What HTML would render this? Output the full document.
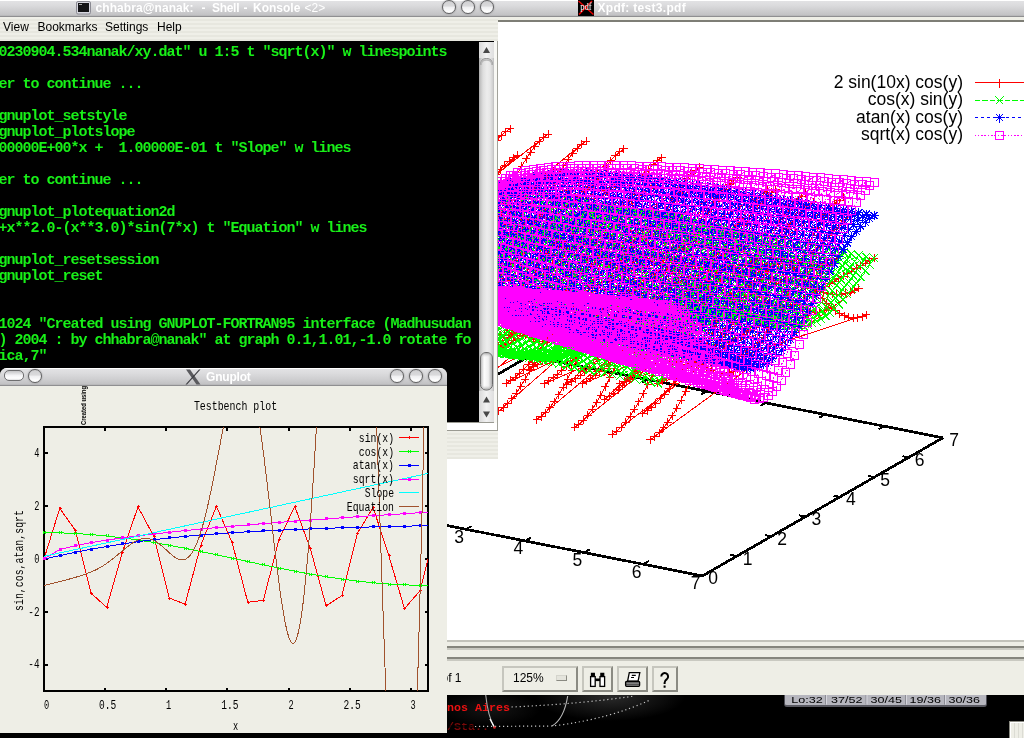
<!DOCTYPE html>
<html><head><meta charset="utf-8"><title>desktop</title>
<style>
html,body{margin:0;padding:0;}
body{width:1024px;height:738px;overflow:hidden;background:#000;position:relative;font-family:"Liberation Sans",sans-serif;}
.abs{position:absolute;}
.tbar{position:absolute;left:0;top:0;height:16px;background:linear-gradient(#fff 0,#fff 1px,#e2e2e4 1px,#dcdcde 5px,#cfcfd1 10px,#c2c2c4 15px,#b0b0b2 16px);border-bottom:1px solid #8f8f91;}
.ttxt{position:absolute;color:#fff;font-weight:bold;font-size:12px;line-height:16px;white-space:nowrap;}
.btn{position:absolute;width:12px;height:12px;border-radius:50%;border:1px solid #606062;background:linear-gradient(#cfcfd1 0,#dadadc 42%,#efeff1 52%,#fff 90%);box-shadow:0 0 1.5px #707072;}
.stripes{background:repeating-linear-gradient(#efefe8 0,#efefe8 2px,#e7e7df 2px,#e7e7df 4px);}
#term{position:absolute;left:0;top:42px;width:479px;text-indent:-1.5px;height:377px;padding-top:3px;background:#000;color:#18f018;font-family:"Liberation Mono",monospace;font-weight:bold;font-size:15px;letter-spacing:-1px;line-height:16px;white-space:pre;overflow:hidden;}
#term div{height:16px;text-indent:-1.5px;}
.tb{box-sizing:border-box;background:#eeeee6;border:2px solid;border-color:#c6c6be #8b8b83 #8b8b83 #c6c6be;}
.mi{position:absolute;top:0;}
</style></head><body>
<div id="root" style="position:absolute;left:0;top:0;width:1024px;height:738px;overflow:hidden;background:#000;will-change:transform;">

<!-- ================= XPDF WINDOW ================= -->
<div class="abs" id="xpdf" style="left:440px;top:0;width:600px;height:695px;background:#eeeee6;">
  <div class="tbar" style="width:600px;"></div>
  <div class="abs" style="left:138px;top:0;width:16px;height:16px;background:#000;overflow:hidden;">
    <svg width="16" height="16" style="position:absolute;left:0;top:0"><path d="M0.500 1L15.500 14.500M14 1L1 14.500" stroke="#e60000" stroke-width="1.500"/><text x="8" y="10.300" font-family="Liberation Serif" font-size="11" fill="#fff" text-anchor="middle" textLength="11.500" lengthAdjust="spacingAndGlyphs">pdf</text></svg>
  </div>
  <div class="ttxt" style="left:157.5px;top:0;letter-spacing:0.3px;">Xpdf: test3.pdf</div>
  <div class="abs" style="left:0;top:20px;width:600px;height:2px;background:#7e7e76;"></div>
  <div class="abs" style="left:0;top:22px;width:600px;height:618px;background:#fff;"></div>
  <!-- bottom bands -->
  <div class="abs" style="left:0;top:640px;width:600px;height:2px;background:#c2c2ba;"></div>
  <div class="abs" style="left:0;top:646px;width:600px;height:2px;background:#85857d;"></div>
  <div class="abs" style="left:0;top:648px;width:600px;height:2px;background:#c9c9c1;"></div>
  <div class="abs" style="left:0;top:657px;width:600px;height:2px;background:#85857d;"></div>
  <div class="abs" style="left:0;top:659px;width:600px;height:2px;background:#c9c9c1;"></div>
  <!-- toolbar -->
  <div class="abs" style="left:1.5px;top:671px;font-size:12px;line-height:14px;color:#000;">of 1</div>
  <div class="abs tb" style="left:62px;top:666px;width:76px;height:26px;"></div>
  <div class="abs" style="left:73px;top:671px;font-size:12px;line-height:14px;color:#000;">125%</div>
  <div class="abs" style="left:116px;top:675px;width:9px;height:4px;background:#e4e4dc;border:1.5px solid;border-color:#d4d4cc #8a8a82 #8a8a82 #d4d4cc;"></div>
  <div class="abs tb" style="left:142px;top:666px;width:31px;height:26px;"></div>
  <div class="abs tb" style="left:177px;top:666px;width:31px;height:26px;"></div>
  <div class="abs tb" style="left:212px;top:666px;width:26px;height:26px;"></div>
  <svg class="abs" style="left:144px;top:666.5px" width="100" height="26">
    <!-- binoculars -->
    <g stroke="#000" stroke-width="1.3" fill="#fff"><rect x="6.600" y="9.6" width="4.6" height="9.8"/><rect x="16" y="9.6" width="4.6" height="9.8"/><path d="M7.5 9.6v-3.2h2.8v3.200M16.900 9.6v-3.2h2.8v3.200" fill="#000"/><path d="M11.200 11.5h4.800v2.600h-4.800" fill="#000" stroke="none"/></g>
    <!-- printer -->
    <g stroke="#000" stroke-width="1.3" fill="#fff"><path d="M45.3 5.600h10.500l-1.700 8.500h-10.500z"/><path d="M47.800 8.300h4M47 10.500h3" stroke-width="1.200"/><rect x="41.600" y="14.300" width="14" height="5" rx="1" fill="#999"/><path d="M42.500 15.800h12.500M42.500 17.600h12.500" stroke="#000" stroke-width="1" stroke-dasharray="1 1"/></g>
    <!-- question -->
    <path d="M77.300 9.500a3.400 3.400 0 1 1 5.600 2.600q-2.300 1.600 -2.300 3.600v1.300M80.600 18.600v2.200" stroke="#000" stroke-width="2" fill="none"/>
  </svg>
</div>

<!-- 3D plot page content -->
<svg class="abs" style="left:0;top:0" width="1024" height="645" viewBox="0 0 1024 645">
  <g shape-rendering="crispEdges" transform="translate(0.5,0.5)">
  <!-- back border -->
  <path d="M288.2 493.8L528.7 355.7L942.4 437.3" stroke="#000" stroke-width="2.7" fill="none"/>
  <path d="M529 355.7l-5.6 3.2M588.1 367.3l-5.6 3.2M647.2 379l-5.6 3.2M706.3 390.6l-5.6 3.2M765.4 402.3l-5.6 3.2M824.5 413.9l-5.6 3.2M883.6 425.6l-5.6 3.2M942.7 437.2l-5.6 3.2" stroke="#000" stroke-width="2" fill="none"/>
<defs><marker id="mr" markerUnits="userSpaceOnUse" markerWidth="10" markerHeight="10" refX="5" refY="5" overflow="visible"><path d="M1 5h8M5 1v8" stroke="#ff0000" stroke-width="1" fill="none"/></marker><marker id="mg" markerUnits="userSpaceOnUse" markerWidth="10" markerHeight="10" refX="5" refY="5" overflow="visible"><path d="M1 1l8 8M9 1l-8 8" stroke="#00ff00" stroke-width="1" fill="none"/></marker><marker id="mb" markerUnits="userSpaceOnUse" markerWidth="10" markerHeight="10" refX="5" refY="5" overflow="visible"><path d="M0.5 5h9M5 0.5v9M1.5 1.5l7 7M8.5 1.5l-7 7" stroke="#0000ff" stroke-width="1" fill="none"/></marker><marker id="mm" markerUnits="userSpaceOnUse" markerWidth="10" markerHeight="10" refX="5" refY="5" overflow="visible"><path d="M1 1h8v8h-8z" stroke="#ff00ff" stroke-width="1" fill="none"/></marker></defs>
<path d="M484.5 194.7 488.9 192.1 493.3 189.6 497.7 187 502.1 184.5 293.6 253.3M483.3 159.7 487.7 152.3 492.1 145.7 496.5 140 500.9 135.1 505.3 131.1 509.7 128.1 301.2 279.7M482 190.8 486.4 184.8 490.8 179.1 495.2 173.8 499.7 169 504.1 164.6 508.5 160.7 512.9 157.3 517.3 154.5 308.7 353.3M485.2 227.8 489.6 229.7 494 231.3 498.4 232.4 502.8 233.1 507.2 233.3 511.6 232.9 516.1 231.9 520.5 230.3 524.9 228.1 316.3 370.9M483.9 227.4 488.3 231.7 492.8 235.8 497.2 239.5 501.6 242.8 506 245.5 510.4 247.5 514.8 248.8 519.2 249.3 523.6 249 528 247.8 532.5 245.7 323.9 309.4M482.7 225.9 487.1 222.4 491.5 218.8 495.9 215.3 500.3 211.8 504.7 208.4 509.2 205 513.6 201.7 518 198.5 522.4 195.4 526.8 192.5 531.2 189.6 535.6 186.8 540 184.2 331.5 259M485.9 242.5 490.3 232.4 494.7 222.2 499.1 212 503.5 202 507.9 192.3 512.3 183 516.7 174.2 521.1 165.9 525.6 158.4 530 151.7 534.4 145.8 538.8 140.9 543.2 136.9 547.6 133.8 339 294M484.6 247.9 489 242.3 493.4 236.5 497.8 230.7 502.3 224.8 506.7 218.9 511.1 213 515.5 207.3 519.9 201.8 524.3 196.5 528.7 191.4 533.1 186.7 537.5 182.3 542 178.3 546.4 174.7 550.8 171.5 555.2 168.7 346.6 366.4M483.4 212.4 487.8 214.3 492.2 216.6 496.6 219.3 501 222.3 505.4 225.4 509.8 228.5 514.2 231.7 518.7 234.7 523.1 237.5 527.5 240.1 531.9 242.2 536.3 243.9 540.7 245 545.1 245.6 549.5 245.5 553.9 244.8 558.4 243.3 562.8 241.1 354.2 374.8M482.1 205.7 486.5 207.1 490.9 209.2 495.4 211.8 499.8 214.9 504.2 218.4 508.6 222.2 513 226.2 517.4 230.2 521.8 234.3 526.2 238.2 530.6 241.8 535.1 245.1 539.5 248 543.9 250.4 548.3 252.1 552.7 253.1 557.1 253.5 561.5 253 565.9 251.7 570.3 249.6 361.8 309.3M485.3 266.9 489.7 263.4 494.1 259.6 498.5 255.7 502.9 251.6 507.3 247.4 511.8 243 516.2 238.6 520.6 234.1 525 229.6 529.4 225.1 533.8 220.6 538.2 216.2 542.6 211.9 547 207.8 551.5 203.7 555.9 199.9 560.3 196.3 564.7 192.9 569.1 189.7 573.5 186.8 577.9 184.1 369.4 265.8M484 318.9 488.5 314.4 492.9 309 497.3 302.6 501.7 295.4 506.1 287.5 510.5 278.9 514.9 269.7 519.3 260.1 523.7 250.1 528.2 239.9 532.6 229.6 537 219.4 541.4 209.3 545.8 199.5 550.2 190.1 554.6 181.2 559 172.9 563.4 165.3 567.9 158.5 572.3 152.6 576.7 147.6 581.1 143.6 585.5 140.5 376.9 308.6M482.8 285.3 487.2 282.7 491.6 279.9 496 276.7 500.4 273.2 504.9 269.5 509.3 265.5 513.7 261.2 518.1 256.7 522.5 252.1 526.9 247.3 531.3 242.4 535.7 237.5 540.1 232.5 544.6 227.5 549 222.5 553.4 217.7 557.8 213 562.2 208.4 566.6 204.1 571 199.9 575.4 196 579.8 192.4 584.3 189.1 588.7 186.1 593.1 183.4 384.5 378.7M486 221.7 490.4 218.3 494.8 215.8 499.2 214 503.6 213.1 508 212.9 512.4 213.5 516.8 214.7 521.3 216.6 525.7 219 530.1 221.9 534.5 225.1 538.9 228.7 543.3 232.4 547.7 236.2 552.1 239.9 556.5 243.5 561 246.9 565.4 250 569.8 252.7 574.2 254.8 578.6 256.4 583 257.3 587.4 257.5 591.8 256.9 596.2 255.6 600.7 253.4 392.1 377.8M484.7 234.4 489.1 229.6 493.6 225.5 498 222.2 502.4 219.6 506.8 217.8 511.2 216.8 515.6 216.5 520 216.9 524.4 218 528.8 219.6 533.2 221.8 537.7 224.4 542.1 227.4 546.5 230.7 550.9 234.1 555.3 237.6 559.7 241 564.1 244.4 568.5 247.5 572.9 250.3 577.4 252.7 581.8 254.6 586.2 256 590.6 256.8 595 256.8 599.4 256.2 603.8 254.8 608.2 252.6 399.7 309.4M483.5 300.8 487.9 300 492.3 298.9 496.7 297.4 501.1 295.6 505.5 293.4 510 290.8 514.4 287.9 518.8 284.6 523.2 281 527.6 277 532 272.7 536.4 268.1 540.8 263.3 545.2 258.3 549.7 253 554.1 247.7 558.5 242.3 562.9 236.8 567.3 231.4 571.7 226 576.1 220.7 580.5 215.6 584.9 210.6 589.3 205.9 593.8 201.5 598.2 197.4 602.6 193.5 607 190.1 611.4 187 615.8 184.2 407.3 273.5M482.2 324.6 486.7 328 491.1 330.8 495.5 332.9 499.9 334.1 504.3 334.4 508.7 333.8 513.1 332.3 517.5 329.7 521.9 326.2 526.4 321.7 530.8 316.2 535.2 309.9 539.6 302.7 544 294.8 548.4 286.2 552.8 277.1 557.2 267.5 561.6 257.5 566.1 247.4 570.5 237.1 574.9 226.9 579.3 216.8 583.7 207 588.1 197.7 592.5 188.8 596.9 180.5 601.3 173 605.8 166.2 610.2 160.3 614.6 155.3 619 151.3 623.4 148.3 414.8 323.5M485.4 299.5 489.8 298.3 494.2 296.9 498.6 295.3 503.1 293.7 507.5 291.8 511.9 289.8 516.3 287.7 520.7 285.3 525.1 282.7 529.5 280 533.9 277.1 538.3 273.9 542.8 270.7 547.2 267.2 551.6 263.6 556 259.9 560.4 256.1 564.8 252.2 569.2 248.2 573.6 244.2 578 240.2 582.5 236.1 586.9 232.1 591.3 228.2 595.7 224.3 600.1 220.6 604.5 216.9 608.9 213.4 613.3 210 617.7 206.8 622.2 203.8 626.6 201 631 198.3 422.4 390.1M484.2 288.9 488.6 279.8 493 270.9 497.4 262.5 501.8 254.6 506.2 247.3 510.6 240.6 515 234.7 519.5 229.5 523.9 225.2 528.3 221.8 532.7 219.3 537.1 217.6 541.5 216.8 545.9 216.8 550.3 217.6 554.7 219.1 559.2 221.4 563.6 224.2 568 227.5 572.4 231.2 576.8 235.2 581.2 239.4 585.6 243.7 590 248 594.4 252.2 598.9 256 603.3 259.6 607.7 262.6 612.1 265.2 616.5 267.1 620.9 268.2 625.3 268.7 629.7 268.3 634.1 267 638.6 264.9 430 380.1M482.9 308.8 487.3 300.8 491.7 293 496.2 285.2 500.6 277.8 505 270.6 509.4 263.8 513.8 257.5 518.2 251.8 522.6 246.6 527 242 531.4 238.1 535.9 234.8 540.3 232.3 544.7 230.4 549.1 229.2 553.5 228.7 557.9 228.8 562.3 229.4 566.7 230.6 571.1 232.3 575.6 234.3 580 236.7 584.4 239.3 588.8 242 593.2 244.9 597.6 247.7 602 250.4 606.4 252.9 610.8 255.1 615.3 256.9 619.7 258.4 624.1 259.3 628.5 259.7 632.9 259.5 637.3 258.6 641.7 257.1 646.1 254.9 437.6 309.9M481.7 305.6 486.1 306.7 490.5 308 494.9 309.2 499.3 310.4 503.7 311.5 508.1 312.4 512.6 313.1 517 313.5 521.4 313.6 525.8 313.3 530.2 312.6 534.6 311.5 539 309.9 543.4 307.8 547.8 305.3 552.3 302.2 556.7 298.7 561.1 294.7 565.5 290.3 569.9 285.5 574.3 280.3 578.7 274.8 583.1 269 587.5 262.9 592 256.7 596.4 250.4 600.8 244.1 605.2 237.7 609.6 231.5 614 225.4 618.4 219.4 622.8 213.8 627.2 208.4 631.7 203.4 636.1 198.8 640.5 194.5 644.9 190.8 649.3 187.5 653.7 184.7 445.1 282.2M484.8 294.2 489.3 298.8 493.7 303.6 498.1 308.5 502.5 313.5 506.9 318.4 511.3 323.1 515.7 327.4 520.1 331.3 524.5 334.7 529 337.4 533.4 339.3 537.8 340.5 542.2 340.7 546.6 340.1 551 338.5 555.4 335.9 559.8 332.4 564.2 328 568.7 322.6 573.1 316.3 577.5 309.2 581.9 301.4 586.3 293 590.7 284 595.1 274.5 599.5 264.7 603.9 254.7 608.4 244.6 612.8 234.6 617.2 224.6 621.6 215 626 205.8 630.4 197 634.8 188.9 639.2 181.4 643.6 174.8 648.1 168.9 652.5 164 656.9 160 661.3 157 452.7 338.7M483.6 322.3 488 320.1 492.4 318 496.8 315.9 501.2 313.8 505.7 311.8 510.1 309.7 514.5 307.6 518.9 305.6 523.3 303.5 527.7 301.3 532.1 299.2 536.5 297 540.9 294.7 545.4 292.4 549.8 290 554.2 287.6 558.6 285.1 563 282.5 567.4 279.9 571.8 277.2 576.2 274.5 580.6 271.7 585.1 268.8 589.5 265.9 593.9 263 598.3 260 602.7 257 607.1 254 611.5 250.9 615.9 247.9 620.3 244.8 624.8 241.8 629.2 238.8 633.6 235.8 638 232.8 642.4 229.9 646.8 227 651.2 224.2 655.6 221.4 660 218.7 664.5 216.1 668.9 213.5 460.3 400.7M482.4 376.7 486.8 369.4 491.2 361.5 495.6 353 500 344 504.4 334.6 508.8 325 513.2 315.2 517.6 305.4 522.1 295.7 526.5 286.1 530.9 277 535.3 268.2 539.7 259.9 544.1 252.3 548.5 245.4 552.9 239.3 557.3 234 561.8 229.6 566.2 226.2 570.6 223.6 575 222 579.4 221.3 583.8 221.4 588.2 222.4 592.6 224.2 597 226.7 601.5 229.9 605.9 233.5 610.3 237.6 614.7 242 619.1 246.6 623.5 251.3 627.9 256 632.3 260.5 636.7 264.8 641.2 268.7 645.6 272.1 650 274.9 654.4 277 658.8 278.4 663.2 279 667.6 278.8 672 277.6 676.4 275.5 467.9 381.7M485.5 366.8 489.9 361.7 494.3 356.2 498.8 350.2 503.2 343.8 507.6 337.2 512 330.3 516.4 323.2 520.8 316 525.2 308.9 529.6 301.7 534 294.7 538.5 288 542.9 281.4 547.3 275.3 551.7 269.5 556.1 264.2 560.5 259.3 564.9 255 569.3 251.3 573.7 248.2 578.2 245.6 582.6 243.6 587 242.3 591.4 241.4 595.8 241.2 600.2 241.4 604.6 242 609 243.1 613.4 244.5 617.9 246.2 622.3 248.1 626.7 250.1 631.1 252.2 635.5 254.2 639.9 256.2 644.3 258 648.7 259.5 653.1 260.7 657.6 261.6 662 262.1 666.4 262 670.8 261.5 675.2 260.4 679.6 258.7 684 256.5 475.5 310.9M484.3 307 488.7 305.9 493.1 305.3 497.5 305.3 501.9 305.8 506.3 306.6 510.7 307.9 515.2 309.4 519.6 311.2 524 313.2 528.4 315.2 532.8 317.3 537.2 319.3 541.6 321.2 546 322.9 550.4 324.3 554.9 325.3 559.3 326 563.7 326.2 568.1 325.9 572.5 325.1 576.9 323.7 581.3 321.8 585.7 319.2 590.1 316.1 594.6 312.3 599 308 603.4 303.2 607.8 297.9 612.2 292.1 616.6 285.9 621 279.4 625.4 272.6 629.8 265.6 634.3 258.5 638.7 251.3 643.1 244.2 647.5 237.1 651.9 230.2 656.3 223.5 660.7 217.2 665.1 211.2 669.5 205.6 674 200.6 678.4 196 682.8 192 687.2 188.5 691.6 185.7 483 291.9 487.4 289.8 491.9 288.6 496.3 288.3 500.7 288.9 505.1 290.3 509.5 292.5 513.9 295.3 518.3 298.7 522.7 302.6 527.1 306.9 531.6 311.4 536 316.1 540.4 320.8 544.8 325.4 549.2 329.8 553.6 333.9 558 337.5 562.4 340.6 566.8 343.1 571.3 344.9 575.7 345.9 580.1 346.1 584.5 345.4 588.9 343.8 593.3 341.2 597.7 337.7 602.1 333.3 606.5 328.1 611 321.9 615.4 315 619.8 307.4 624.2 299.2 628.6 290.4 633 281.2 637.4 271.7 641.8 262 646.2 252.2 650.7 242.4 655.1 232.7 659.5 223.4 663.9 214.4 668.3 205.9 672.7 197.9 677.1 190.7 681.5 184.1 685.9 178.4 690.4 173.6 694.8 169.7 699.2 166.6 490.6 353.9 495 351.3 499.4 348.7 503.8 346 508.3 343.2 512.7 340.4 517.1 337.5 521.5 334.6 525.9 331.6 530.3 328.6 534.7 325.6 539.1 322.5 543.5 319.5 548 316.4 552.4 313.4 556.8 310.4 561.2 307.4 565.6 304.4 570 301.4 574.4 298.5 578.8 295.7 583.2 292.9 587.7 290.1 592.1 287.5 596.5 284.8 600.9 282.3 605.3 279.8 609.7 277.4 614.1 275 618.5 272.7 622.9 270.4 627.4 268.2 631.8 266 636.2 263.9 640.6 261.8 645 259.7 649.4 257.7 653.8 255.6 658.2 253.5 662.6 251.5 667.1 249.4 671.5 247.3 675.9 245.1 680.3 242.9 684.7 240.7 689.1 238.4 693.5 236.1 697.9 233.7 702.3 231.2 706.8 228.7 498.2 410.4 502.6 407.4 507 403.4 511.4 398.4 515.8 392.6 520.2 385.9 524.7 378.5 529.1 370.4 533.5 361.6 537.9 352.4 542.3 342.7 546.7 332.8 551.1 322.7 555.5 312.7 559.9 302.6 564.4 292.9 568.8 283.4 573.2 274.4 577.6 265.9 582 258.1 586.4 251.1 590.8 244.8 595.2 239.4 599.6 234.9 604.1 231.4 608.5 228.9 612.9 227.3 617.3 226.6 621.7 226.9 626.1 228.1 630.5 230 634.9 232.7 639.3 236.1 643.8 240 648.2 244.3 652.6 249 657 253.9 661.4 258.9 665.8 263.8 670.2 268.6 674.6 273.1 679 277.3 683.5 280.9 687.9 283.9 692.3 286.3 696.7 287.8 701.1 288.6 705.5 288.4 709.9 287.3 714.3 285.2 505.8 382.7 510.2 379.9 514.6 376.6 519 372.8 523.4 368.6 527.8 364 532.2 359 536.6 353.6 541.1 347.9 545.5 342 549.9 335.9 554.3 329.6 558.7 323.3 563.1 317 567.5 310.6 571.9 304.5 576.3 298.4 580.8 292.6 585.2 287.1 589.6 281.9 594 277.1 598.4 272.7 602.8 268.7 607.2 265.2 611.6 262.1 616 259.6 620.5 257.5 624.9 255.9 629.3 254.8 633.7 254.1 638.1 253.8 642.5 253.9 646.9 254.3 651.3 255 655.7 255.9 660.2 257 664.6 258.2 669 259.4 673.4 260.6 677.8 261.8 682.2 262.8 686.6 263.6 691 264.2 695.4 264.4 699.9 264.3 704.3 263.8 708.7 262.9 713.1 261.6 717.5 259.7 721.9 257.4 513.3 312.5 517.8 310.3 522.2 308.8 526.6 307.9 531 307.7 535.4 308.1 539.8 309 544.2 310.4 548.6 312.3 553 314.5 557.5 317 561.9 319.7 566.3 322.5 570.7 325.3 575.1 328.1 579.5 330.7 583.9 333.1 588.3 335.1 592.7 336.8 597.2 338 601.6 338.6 606 338.7 610.4 338.2 614.8 337 619.2 335.1 623.6 332.6 628 329.3 632.4 325.4 636.9 320.8 641.3 315.6 645.7 309.8 650.1 303.5 654.5 296.8 658.9 289.6 663.3 282.1 667.7 274.4 672.1 266.5 676.6 258.6 681 250.7 685.4 242.9 689.8 235.3 694.2 228 698.6 221 703 214.4 707.4 208.4 711.8 202.9 716.3 198 720.7 193.8 725.1 190.2 729.5 187.3 520.9 302.5 525.3 300.3 529.7 299.1 534.2 298.7 538.6 299.1 543 300.3 547.4 302.2 551.8 304.7 556.2 307.8 560.6 311.3 565 315.2 569.4 319.4 573.9 323.6 578.3 327.9 582.7 332.1 587.1 336.2 591.5 339.9 595.9 343.2 600.3 346 604.7 348.2 609.1 349.8 613.6 350.6 618 350.6 622.4 349.8 626.8 348.1 631.2 345.6 635.6 342.1 640 337.8 644.4 332.7 648.8 326.8 653.3 320.1 657.7 312.8 662.1 304.9 666.5 296.4 670.9 287.6 675.3 278.5 679.7 269.2 684.1 259.7 688.5 250.4 693 241.1 697.4 232.1 701.8 223.5 706.2 215.3 710.6 207.7 715 200.6 719.4 194.3 723.8 188.8 728.2 184.1 732.7 180.2 737.1 177.2 528.5 369 532.9 366.4 537.3 363.6 541.7 360.5 546.1 357.3 550.6 354 555 350.5 559.4 346.8 563.8 343 568.2 339.2 572.6 335.2 577 331.2 581.4 327.2 585.8 323.2 590.3 319.2 594.7 315.2 599.1 311.3 603.5 307.5 607.9 303.7 612.3 300.2 616.7 296.7 621.1 293.4 625.5 290.3 630 287.4 634.4 284.6 638.8 282.1 643.2 279.7 647.6 277.5 652 275.5 656.4 273.7 660.8 272 665.2 270.5 669.7 269.1 674.1 267.8 678.5 266.6 682.9 265.5 687.3 264.4 691.7 263.3 696.1 262.2 700.5 261.1 704.9 260 709.4 258.7 713.8 257.4 718.2 255.9 722.6 254.3 727 252.6 731.4 250.6 735.8 248.6 740.2 246.3 744.6 243.8 536.1 419.1 540.5 416.1 544.9 412 549.3 407.1 553.7 401.2 558.1 394.4 562.5 386.9 567 378.6 571.4 369.7 575.8 360.3 580.2 350.5 584.6 340.5 589 330.3 593.4 320 597.8 309.8 602.2 299.9 606.7 290.3 611.1 281.2 615.5 272.6 619.9 264.7 624.3 257.5 628.7 251.2 633.1 245.7 637.5 241.2 641.9 237.7 646.4 235.1 650.8 233.5 655.2 232.9 659.6 233.3 664 234.5 668.4 236.6 672.8 239.4 677.2 242.8 681.6 246.9 686.1 251.3 690.5 256.2 694.9 261.2 699.3 266.4 703.7 271.5 708.1 276.4 712.5 281.1 716.9 285.4 721.3 289.1 725.8 292.3 730.2 294.7 734.6 296.4 739 297.2 743.4 297 747.8 296 752.2 293.9 543.7 383.2 548.1 380.4 552.5 377.3 556.9 373.8 561.3 370 565.7 365.9 570.1 361.4 574.5 356.7 579 351.8 583.4 346.7 587.8 341.4 592.2 336 596.6 330.6 601 325.1 605.4 319.7 609.8 314.3 614.2 309.1 618.6 304.1 623.1 299.3 627.5 294.7 631.9 290.4 636.3 286.4 640.7 282.8 645.1 279.5 649.5 276.5 653.9 274 658.3 271.8 662.8 270 667.2 268.5 671.6 267.4 676 266.6 680.4 266 684.8 265.7 689.2 265.7 693.6 265.8 698 266 702.5 266.3 706.9 266.7 711.3 267 715.7 267.3 720.1 267.4 724.5 267.5 728.9 267.3 733.3 266.9 737.7 266.2 742.2 265.2 746.6 263.9 751 262.3 755.4 260.3 759.8 257.9 551.2 314.8 555.7 312.6 560.1 311.2 564.5 310.5 568.9 310.6 573.3 311.4 577.7 312.7 582.1 314.7 586.5 317.1 590.9 319.9 595.4 323 599.8 326.3 604.2 329.8 608.6 333.3 613 336.7 617.4 340 621.8 342.9 626.2 345.6 630.6 347.7 635.1 349.4 639.5 350.5 643.9 350.9 648.3 350.6 652.7 349.6 657.1 347.8 661.5 345.2 665.9 341.9 670.3 337.8 674.7 333 679.2 327.4 683.6 321.3 688 314.5 692.4 307.2 696.8 299.5 701.2 291.4 705.6 283 710 274.5 714.4 265.9 718.9 257.3 723.3 248.9 727.7 240.6 732.1 232.7 736.5 225.2 740.9 218.2 745.3 211.7 749.7 205.8 754.1 200.7 758.6 196.2 763 192.5 767.4 189.5 558.8 313.9 563.2 311.8 567.6 310.4 572.1 309.9 576.5 310.1 580.9 311 585.3 312.6 589.7 314.7 594.1 317.4 598.5 320.4 602.9 323.8 607.3 327.5 611.8 331.2 616.2 335 620.6 338.7 625 342.3 629.4 345.5 633.8 348.4 638.2 350.8 642.6 352.6 647 353.9 651.5 354.4 655.9 354.3 660.3 353.3 664.7 351.6 669.1 349 673.5 345.7 677.9 341.5 682.3 336.6 686.7 330.9 691.2 324.5 695.6 317.6 700 310 704.4 302.1 708.8 293.7 713.2 285.1 717.6 276.2 722 267.3 726.4 258.5 730.8 249.7 735.3 241.2 739.7 233 744.1 225.3 748.5 218 752.9 211.3 757.3 205.3 761.7 200 766.1 195.4 770.5 191.7 775 188.7 566.4 384 570.8 381.3 575.2 378.3 579.6 374.9 584 371.3 588.5 367.4 592.9 363.3 597.3 359 601.7 354.4 606.1 349.7 610.5 344.8 614.9 339.9 619.3 334.9 623.7 329.9 628.2 325 632.6 320.1 637 315.3 641.4 310.6 645.8 306.2 650.2 301.9 654.6 297.9 659 294.2 663.4 290.7 667.9 287.5 672.3 284.6 676.7 282.1 681.1 279.8 685.5 277.9 689.9 276.3 694.3 274.9 698.7 273.8 703.1 273 707.6 272.3 712 271.8 716.4 271.5 720.8 271.3 725.2 271.1 729.6 271 734 270.9 738.4 270.7 742.8 270.5 747.2 270.1 751.7 269.5 756.1 268.8 760.5 267.8 764.9 266.6 769.3 265.1 773.7 263.3 778.1 261.2 782.5 258.8 574 426.8 578.4 423.8 582.8 419.8 587.2 414.8 591.6 408.8 596 402.1 600.4 394.5 604.9 386.2 609.3 377.3 613.7 367.9 618.1 358.1 622.5 348 626.9 337.7 631.3 327.4 635.7 317.3 640.1 307.3 644.6 297.7 649 288.5 653.4 279.9 657.8 271.9 662.2 264.8 666.6 258.4 671 253 675.4 248.4 679.8 244.9 684.3 242.3 688.7 240.8 693.1 240.2 697.5 240.5 701.9 241.8 706.3 243.8 710.7 246.7 715.1 250.1 719.5 254.2 724 258.7 728.4 263.6 732.8 268.7 737.2 273.8 741.6 279 746 284 750.4 288.7 754.8 293 759.2 296.8 763.7 299.9 768.1 302.4 772.5 304.1 776.9 304.9 781.3 304.7 785.7 303.7 790.1 301.6 581.6 383.3 586 380.6 590.4 377.7 594.8 374.5 599.2 371.1 603.6 367.5 608 363.6 612.4 359.6 616.8 355.5 621.3 351.2 625.7 346.8 630.1 342.3 634.5 337.8 638.9 333.3 643.3 328.8 647.7 324.3 652.1 320 656.5 315.8 661 311.7 665.4 307.7 669.8 304 674.2 300.5 678.6 297.2 683 294.1 687.4 291.3 691.8 288.8 696.2 286.5 700.7 284.4 705.1 282.6 709.5 281 713.9 279.6 718.3 278.4 722.7 277.4 727.1 276.5 731.5 275.8 735.9 275.1 740.4 274.5 744.8 273.9 749.2 273.3 753.6 272.7 758 271.9 762.4 271.1 766.8 270.2 771.2 269.1 775.6 267.8 780.1 266.3 784.5 264.6 788.9 262.7 793.3 260.5 797.7 258.1 589.1 317.8 593.5 315.7 598 314.4 602.4 313.9 606.8 314.2 611.2 315.3 615.6 317 620 319.4 624.4 322.2 628.8 325.5 633.2 329.2 637.7 333.1 642.1 337.1 646.5 341.2 650.9 345.2 655.3 349 659.7 352.5 664.1 355.6 668.5 358.2 672.9 360.2 677.4 361.6 681.8 362.3 686.2 362.3 690.6 361.4 695 359.7 699.4 357.1 703.8 353.7 708.2 349.5 712.6 344.4 717.1 338.6 721.5 332.1 725.9 325 730.3 317.2 734.7 309 739.1 300.4 743.5 291.5 747.9 282.4 752.3 273.2 756.8 264.1 761.2 255.1 765.6 246.3 770 237.9 774.4 229.9 778.8 222.5 783.2 215.6 787.6 209.4 792 204 796.5 199.4 800.9 195.6 805.3 192.6 596.7 326.2 601.1 324 605.5 322.6 609.9 321.8 614.4 321.8 618.8 322.3 623.2 323.5 627.6 325.2 632 327.3 636.4 329.8 640.8 332.7 645.2 335.7 649.6 338.8 654.1 342 658.5 345.1 662.9 348.1 667.3 350.7 671.7 353.1 676.1 355 680.5 356.4 684.9 357.3 689.3 357.6 693.8 357.2 698.2 356.1 702.6 354.2 707 351.7 711.4 348.4 715.8 344.4 720.2 339.7 724.6 334.3 729 328.3 733.5 321.8 737.9 314.8 742.3 307.3 746.7 299.5 751.1 291.5 755.5 283.2 759.9 275 764.3 266.7 768.7 258.6 773.2 250.6 777.6 243 782 235.7 786.4 228.9 790.8 222.7 795.2 217 799.6 211.9 804 207.6 808.4 203.9 812.9 201 604.3 398.6 608.7 395.9 613.1 392.7 617.5 389.1 621.9 385.1 626.3 380.7 630.8 375.9 635.2 370.9 639.6 365.6 644 360 648.4 354.3 652.8 348.5 657.2 342.6 661.6 336.7 666 330.8 670.5 325.1 674.9 319.4 679.3 314 683.7 308.8 688.1 303.9 692.5 299.4 696.9 295.2 701.3 291.3 705.7 287.9 710.2 285 714.6 282.4 719 280.3 723.4 278.6 727.8 277.3 732.2 276.4 736.6 275.8 741 275.6 745.4 275.7 749.9 276 754.3 276.5 758.7 277.2 763.1 277.9 767.5 278.7 771.9 279.5 776.3 280.2 780.7 280.8 785.1 281.2 789.6 281.4 794 281.4 798.4 281 802.8 280.3 807.2 279.2 811.6 277.7 816 275.8 820.4 273.4 611.9 433.6 616.3 430.5 620.7 426.5 625.1 421.5 629.5 415.7 633.9 408.9 638.3 401.4 642.7 393.2 647.2 384.4 651.6 375.1 656 365.3 660.4 355.3 664.8 345.2 669.2 335 673.6 324.9 678 315 682.4 305.5 686.9 296.4 691.3 287.8 695.7 280 700.1 272.9 704.5 266.5 708.9 261.1 713.3 256.6 717.7 253.1 722.1 250.5 726.6 249 731 248.3 735.4 248.7 739.8 249.9 744.2 251.9 748.6 254.6 753 258 757.4 262 761.8 266.5 766.3 271.2 770.7 276.2 775.1 281.3 779.5 286.3 783.9 291.2 788.3 295.8 792.7 300.1 797.1 303.8 801.5 306.9 806 309.3 810.4 310.9 814.8 311.6 819.2 311.5 823.6 310.4 828 308.3 619.4 383.2 623.9 380.5 628.3 377.8 632.7 374.9 637.1 371.9 641.5 368.8 645.9 365.6 650.3 362.4 654.7 359 659.1 355.6 663.6 352.1 668 348.6 672.4 345 676.8 341.5 681.2 337.9 685.6 334.4 690 331 694.4 327.6 698.8 324.2 703.3 321 707.7 317.8 712.1 314.8 716.5 311.9 720.9 309.1 725.3 306.4 729.7 303.8 734.1 301.4 738.5 299.1 743 296.9 747.4 294.8 751.8 292.9 756.2 291 760.6 289.2 765 287.5 769.4 285.9 773.8 284.3 778.2 282.7 782.7 281.1 787.1 279.6 791.5 278 795.9 276.3 800.3 274.7 804.7 272.9 809.1 271.1 813.5 269.2 817.9 267.2 822.4 265 826.8 262.8 831.2 260.4 835.6 257.9 627 321.7 631.4 319.6 635.8 318.4 640.3 318.1 644.7 318.6 649.1 319.9 653.5 321.9 657.9 324.6 662.3 327.8 666.7 331.6 671.1 335.7 675.5 340 680 344.5 684.4 349 688.8 353.4 693.2 357.7 697.6 361.6 702 365.1 706.4 368.1 710.8 370.4 715.2 372.1 719.7 373 724.1 373.1 728.5 372.4 732.9 370.7 737.3 368.2 741.7 364.7 746.1 360.3 750.5 355.1 754.9 349.1 759.4 342.3 763.8 334.8 768.2 326.7 772.6 318.1 777 309.1 781.4 299.8 785.8 290.2 790.2 280.6 794.6 271 799.1 261.5 803.5 252.3 807.9 243.5 812.3 235.2 816.7 227.4 821.1 220.2 825.5 213.8 829.9 208.2 834.3 203.4 838.8 199.5 843.2 196.5 634.6 339.3 639 337 643.4 335.4 647.8 334.5 652.2 334.1 656.7 334.3 661.1 335 665.5 336.1 669.9 337.7 674.3 339.6 678.7 341.7 683.1 344.1 687.5 346.5 691.9 349 696.4 351.4 700.8 353.6 705.2 355.6 709.6 357.4 714 358.7 718.4 359.7 722.8 360.1 727.2 360 731.6 359.4 736.1 358.1 740.5 356.2 744.9 353.6 749.3 350.4 753.7 346.6 758.1 342.1 762.5 337.1 766.9 331.6 771.3 325.5 775.8 319 780.2 312.2 784.6 305 789 297.7 793.4 290.2 797.8 282.6 802.2 275.1 806.6 267.6 811 260.3 815.5 253.3 819.9 246.7 824.3 240.4 828.7 234.6 833.1 229.3 837.5 224.6 841.9 220.4 846.3 216.9 850.7 214 642.2 412.9 646.6 410 651 406.7 655.4 402.8 659.8 398.4 664.2 393.5 668.6 388.2 673.1 382.6 677.5 376.5 681.9 370.2 686.3 363.7 690.7 357.1 695.1 350.3 699.5 343.5 703.9 336.8 708.3 330.2 712.8 323.8 717.2 317.6 721.6 311.8 726 306.3 730.4 301.2 734.8 296.6 739.2 292.4 743.6 288.8 748 285.7 752.5 283.1 756.9 281.1 761.3 279.6 765.7 278.7 770.1 278.2 774.5 278.2 778.9 278.5 783.3 279.3 787.7 280.3 792.2 281.6 796.6 283.1 801 284.7 805.4 286.4 809.8 288.1 814.2 289.6 818.6 291 823 292.2 827.4 293.1 831.9 293.7 836.3 293.9 840.7 293.6 845.1 292.9 849.5 291.7 853.9 289.9 858.3 287.6 649.8 439.3 654.2 436.3 658.6 432.3 663 427.4 667.4 421.6 671.8 415 676.2 407.7 680.6 399.6 685 391 689.5 381.8 693.9 372.3 698.3 362.5 702.7 352.6 707.1 342.6 711.5 332.7 715.9 323.1 720.3 313.7 724.7 304.8 729.2 296.5 733.6 288.8 738 281.8 742.4 275.6 746.8 270.2 751.2 265.8 755.6 262.3 760 259.7 764.4 258.1 768.9 257.5 773.3 257.7 777.7 258.8 782.1 260.6 786.5 263.3 790.9 266.5 795.3 270.3 799.7 274.5 804.1 279.1 808.6 283.8 813 288.7 817.4 293.5 821.8 298.2 826.2 302.6 830.6 306.6 835 310.2 839.4 313.1 843.8 315.4 848.3 316.9 852.7 317.5 857.1 317.3 861.5 316.2 865.9 314.1 657.3 382.9 661.7 380.3 666.2 377.8 670.6 375.2 675 372.7 679.4 370.1 683.8 367.6 688.2 365 692.6 362.5 697 359.9 701.4 357.3 705.9 354.8 710.3 352.2 714.7 349.7 719.1 347.1 723.5 344.6 727.9 342 732.3 339.5 736.7 336.9 741.1 334.3 745.6 331.8 750 329.2 754.4 326.7 758.8 324.1 763.2 321.6 767.6 319 772 316.5 776.4 313.9 780.8 311.3 785.3 308.8 789.7 306.2 794.1 303.7 798.5 301.1 802.9 298.6 807.3 296 811.7 293.5 816.1 290.9 820.5 288.3 825 285.8 829.4 283.2 833.8 280.7 838.2 278.1 842.6 275.6 847 273 851.4 270.5 855.8 267.9 860.2 265.3 864.7 262.8 869.1 260.2 873.5 257.7" stroke="#ff0000" fill="none" stroke-width="1" marker-start="url(#mr)" marker-mid="url(#mr)" marker-end="url(#mr)"/>
<path d="M484.5 209.5 488.9 203.5 493.3 197.2 497.7 190.9 502.1 184.5 293.6 311.2M483.3 222.1 487.7 216.7 492.1 210.9 496.5 204.9 500.9 198.7 505.3 192.4 509.7 186 301.2 312.7M482 232.9 486.4 228.2 490.8 223.1 495.2 217.7 499.7 212 504.1 206.1 508.5 200 512.9 193.8 517.3 187.5 308.7 314.2M485.2 237.6 489.6 233.3 494 228.7 498.4 223.8 502.8 218.5 507.2 212.9 511.6 207.1 516.1 201.2 520.5 195.1 524.9 189 316.3 315.7M483.9 244.5 488.3 241.2 492.8 237.5 497.2 233.4 501.6 228.9 506 224.1 510.4 219 514.8 213.6 519.2 208 523.6 202.2 528 196.4 532.5 190.5 323.9 317.2M482.7 249.3 487.1 246.8 491.5 243.9 495.9 240.7 500.3 237.1 504.7 233.1 509.2 228.8 513.6 224.1 518 219.2 522.4 214 526.8 208.7 531.2 203.2 535.6 197.6 540 191.9 331.5 318.7M485.9 250.4 490.3 248.3 494.7 245.8 499.1 243 503.5 239.8 507.9 236.3 512.3 232.4 516.7 228.3 521.1 223.9 525.6 219.2 530 214.3 534.4 209.2 538.8 204.1 543.2 198.8 547.6 193.4 339 320.2M484.6 252.5 489 250.9 493.4 249.1 497.8 246.9 502.3 244.4 506.7 241.6 511.1 238.5 515.5 235.2 519.9 231.5 524.3 227.5 528.7 223.4 533.1 219 537.5 214.4 542 209.7 546.4 204.8 550.8 199.9 555.2 194.9 346.6 321.7M483.4 254 487.8 252.7 492.2 251.2 496.6 249.5 501 247.5 505.4 245.2 509.8 242.7 514.2 240 518.7 237 523.1 233.7 527.5 230.3 531.9 226.6 536.3 222.7 540.7 218.6 545.1 214.3 549.5 210 553.9 205.5 558.4 201 562.8 196.4 354.2 323.1M482.1 255.7 486.5 254.4 490.9 253 495.4 251.4 499.8 249.6 504.2 247.7 508.6 245.6 513 243.3 517.4 240.8 521.8 238.1 526.2 235.2 530.6 232.1 535.1 228.8 539.5 225.4 543.9 221.8 548.3 218 552.7 214.1 557.1 210.2 561.5 206.1 565.9 202 570.3 197.9 361.8 324.6M485.3 256.8 489.7 255.2 494.1 253.5 498.5 251.8 502.9 249.9 507.3 247.9 511.8 245.8 516.2 243.6 520.6 241.2 525 238.7 529.4 236 533.8 233.2 538.2 230.3 542.6 227.2 547 224 551.5 220.7 555.9 217.3 560.3 213.9 564.7 210.3 569.1 206.7 573.5 203.1 577.9 199.4 369.4 326.1M484 260.6 488.5 258.7 492.9 256.7 497.3 254.6 501.7 252.6 506.1 250.5 510.5 248.3 514.9 246.1 519.3 243.8 523.7 241.4 528.2 238.9 532.6 236.4 537 233.8 541.4 231.1 545.8 228.3 550.2 225.5 554.6 222.6 559 219.6 563.4 216.6 567.9 213.5 572.3 210.4 576.7 207.2 581.1 204.1 585.5 200.9 376.9 327.6M482.8 266.2 487.2 263.8 491.6 261.4 496 258.9 500.4 256.5 504.9 254 509.3 251.6 513.7 249.1 518.1 246.6 522.5 244.2 526.9 241.6 531.3 239.1 535.7 236.6 540.1 234 544.6 231.5 549 228.9 553.4 226.3 557.8 223.7 562.2 221 566.6 218.4 571 215.8 575.4 213.1 579.8 210.4 584.3 207.8 588.7 205.1 593.1 202.4 384.5 329.1M486 270.9 490.4 268 494.8 265 499.2 262.1 503.6 259.2 508 256.3 512.4 253.4 516.8 250.6 521.3 247.8 525.7 245 530.1 242.2 534.5 239.5 538.9 236.8 543.3 234.2 547.7 231.7 552.1 229.1 556.5 226.7 561 224.2 565.4 221.9 569.8 219.5 574.2 217.2 578.6 214.9 583 212.7 587.4 210.5 591.8 208.3 596.2 206.1 600.7 203.9 392.1 330.6M484.7 279.9 489.1 276.5 493.6 273.1 498 269.7 502.4 266.3 506.8 262.9 511.2 259.5 515.6 256.1 520 252.8 524.4 249.6 528.8 246.4 533.2 243.3 537.7 240.3 542.1 237.4 546.5 234.6 550.9 231.9 555.3 229.3 559.7 226.9 564.1 224.5 568.5 222.2 572.9 220.1 577.4 218 581.8 216 586.2 214.1 590.6 212.3 595 210.5 599.4 208.8 603.8 207.1 608.2 205.4 399.7 332.1M483.5 290.3 487.9 286.7 492.3 283 496.7 279.2 501.1 275.3 505.5 271.4 510 267.5 514.4 263.7 518.8 259.8 523.2 256 527.6 252.3 532 248.7 536.4 245.2 540.8 241.8 545.2 238.5 549.7 235.4 554.1 232.5 558.5 229.7 562.9 227.1 567.3 224.7 571.7 222.4 576.1 220.3 580.5 218.4 584.9 216.6 589.3 215 593.8 213.4 598.2 212 602.6 210.6 607 209.3 611.4 208.1 615.8 206.9 407.3 333.6M482.2 301.6 486.7 297.9 491.1 294.1 495.5 290.1 499.9 286 504.3 281.8 508.7 277.5 513.1 273.2 517.5 268.8 521.9 264.5 526.4 260.2 530.8 256 535.2 251.9 539.6 247.9 544 244 548.4 240.4 552.8 236.9 557.2 233.6 561.6 230.5 566.1 227.7 570.5 225.1 574.9 222.7 579.3 220.5 583.7 218.6 588.1 216.9 592.5 215.3 596.9 214 601.3 212.8 605.8 211.7 610.2 210.8 614.6 209.9 619 209.1 623.4 208.4 414.8 335.1M485.4 309.5 489.8 305.8 494.2 301.9 498.6 297.7 503.1 293.4 507.5 288.9 511.9 284.3 516.3 279.6 520.7 274.9 525.1 270.1 529.5 265.3 533.9 260.7 538.3 256 542.8 251.6 547.2 247.2 551.6 243.1 556 239.1 560.4 235.4 564.8 232 569.2 228.8 573.6 225.9 578 223.3 582.5 220.9 586.9 218.9 591.3 217.1 595.7 215.5 600.1 214.3 604.5 213.2 608.9 212.3 613.3 211.6 617.7 211.1 622.2 210.6 626.6 210.2 631 209.9 422.4 336.6M484.2 320.6 488.6 317.3 493 313.7 497.4 309.8 501.8 305.6 506.2 301.2 510.6 296.6 515 291.7 519.5 286.8 523.9 281.7 528.3 276.6 532.7 271.4 537.1 266.3 541.5 261.2 545.9 256.2 550.3 251.4 554.7 246.8 559.2 242.3 563.6 238.2 568 234.3 572.4 230.6 576.8 227.3 581.2 224.4 585.6 221.7 590 219.4 594.4 217.5 598.9 215.8 603.3 214.4 607.7 213.4 612.1 212.6 616.5 212 620.9 211.6 625.3 211.4 629.7 211.3 634.1 211.3 638.6 211.4 430 338.1M482.9 330.4 487.3 327.8 491.7 324.7 496.2 321.3 500.6 317.6 505 313.5 509.4 309.1 513.8 304.4 518.2 299.5 522.6 294.4 527 289.1 531.4 283.7 535.9 278.2 540.3 272.7 544.7 267.2 549.1 261.8 553.5 256.5 557.9 251.4 562.3 246.5 566.7 241.8 571.1 237.4 575.6 233.4 580 229.6 584.4 226.2 588.8 223.2 593.2 220.5 597.6 218.3 602 216.4 606.4 214.8 610.8 213.6 615.3 212.8 619.7 212.2 624.1 211.9 628.5 211.8 632.9 211.9 637.3 212.1 641.7 212.5 646.1 212.9 437.6 339.6M481.7 338.3 486.1 336.5 490.5 334.2 494.9 331.5 499.3 328.5 503.7 325 508.1 321.1 512.6 316.9 517 312.3 521.4 307.4 525.8 302.3 530.2 296.9 534.6 291.3 539 285.6 543.4 279.9 547.8 274.1 552.3 268.3 556.7 262.6 561.1 257 565.5 251.7 569.9 246.5 574.3 241.6 578.7 237 583.1 232.8 587.5 228.9 592 225.5 596.4 222.4 600.8 219.7 605.2 217.5 609.6 215.6 614 214.2 618.4 213.2 622.8 212.5 627.2 212.1 631.7 212 636.1 212.2 640.5 212.5 644.9 213 649.3 213.7 653.7 214.4 445.1 341.1M484.8 343 489.3 341.6 493.7 339.8 498.1 337.6 502.5 334.9 506.9 331.8 511.3 328.3 515.7 324.3 520.1 319.9 524.5 315.2 529 310.2 533.4 304.8 537.8 299.2 542.2 293.4 546.6 287.5 551 281.5 555.4 275.4 559.8 269.4 564.2 263.5 568.7 257.7 573.1 252.1 577.5 246.8 581.9 241.7 586.3 237 590.7 232.6 595.1 228.6 599.5 225.1 603.9 222 608.4 219.3 612.8 217.1 617.2 215.3 621.6 214 626 213 630.4 212.5 634.8 212.3 639.2 212.4 643.6 212.7 648.1 213.3 652.5 214.1 656.9 214.9 661.3 215.8 452.7 342.6M483.6 347.1 488 346.6 492.4 345.8 496.8 344.5 501.2 342.7 505.7 340.5 510.1 337.9 514.5 334.7 518.9 331.1 523.3 327.1 527.7 322.6 532.1 317.8 536.5 312.6 540.9 307.1 545.4 301.3 549.8 295.4 554.2 289.3 558.6 283.1 563 276.8 567.4 270.6 571.8 264.5 576.2 258.6 580.6 252.8 585.1 247.3 589.5 242.1 593.9 237.3 598.3 232.8 602.7 228.8 607.1 225.2 611.5 222 615.9 219.4 620.3 217.2 624.8 215.4 629.2 214.1 633.6 213.3 638 212.8 642.4 212.7 646.8 213 651.2 213.5 655.6 214.3 660 215.2 664.5 216.2 668.9 217.3 460.3 344.1M482.4 349 486.8 349.3 491.2 349.3 495.6 349 500 348.2 504.4 346.9 508.8 345.2 513.2 343 517.6 340.3 522.1 337.2 526.5 333.5 530.9 329.5 535.3 324.9 539.7 320 544.1 314.7 548.5 309.1 552.9 303.3 557.3 297.2 561.8 290.9 566.2 284.6 570.6 278.3 575 271.9 579.4 265.7 583.8 259.6 588.2 253.8 592.6 248.2 597 242.9 601.5 238 605.9 233.4 610.3 229.3 614.7 225.7 619.1 222.6 623.5 219.9 627.9 217.7 632.3 216 636.7 214.7 641.2 213.9 645.6 213.5 650 213.5 654.4 213.9 658.8 214.5 663.2 215.4 667.6 216.4 672 217.6 676.4 218.8 467.9 345.6M485.5 350.1 489.9 350.8 494.3 351.2 498.8 351.2 503.2 350.9 507.6 350.1 512 348.9 516.4 347.2 520.8 345 525.2 342.3 529.6 339.2 534 335.5 538.5 331.4 542.9 326.8 547.3 321.9 551.7 316.5 556.1 310.9 560.5 305 564.9 298.8 569.3 292.5 573.7 286.1 578.2 279.7 582.6 273.3 587 267.1 591.4 260.9 595.8 255 600.2 249.3 604.6 244 609 239.1 613.4 234.5 617.9 230.4 622.3 226.7 626.7 223.6 631.1 220.9 635.5 218.7 639.9 217 644.3 215.8 648.7 215 653.1 214.7 657.6 214.7 662 215.1 666.4 215.8 670.8 216.7 675.2 217.8 679.6 219 684 220.3 475.5 347M484.3 349.6 488.7 350.7 493.1 351.6 497.5 352.3 501.9 352.7 506.3 352.7 510.7 352.4 515.2 351.6 519.6 350.4 524 348.7 528.4 346.5 532.8 343.8 537.2 340.7 541.6 337 546 332.9 550.4 328.3 554.9 323.4 559.3 318 563.7 312.4 568.1 306.5 572.5 300.3 576.9 294 581.3 287.6 585.7 281.2 590.1 274.8 594.6 268.5 599 262.4 603.4 256.5 607.8 250.8 612.2 245.5 616.6 240.5 621 236 625.4 231.9 629.8 228.2 634.3 225 638.7 222.4 643.1 220.2 647.5 218.5 651.9 217.3 656.3 216.5 660.7 216.1 665.1 216.2 669.5 216.6 674 217.3 678.4 218.2 682.8 219.3 687.2 220.5 691.6 221.8 483 348.5 487.4 349.8 491.9 350.9 496.3 352 500.7 352.9 505.1 353.5 509.5 353.8 513.9 353.8 518.3 353.4 522.7 352.6 527.1 351.4 531.6 349.7 536 347.5 540.4 344.8 544.8 341.7 549.2 338 553.6 333.9 558 329.4 562.4 324.5 566.8 319.2 571.3 313.6 575.7 307.7 580.1 301.7 584.5 295.4 588.9 289.1 593.3 282.8 597.7 276.4 602.1 270.2 606.5 264.1 611 258.3 615.4 252.7 619.8 247.4 624.2 242.4 628.6 237.9 633 233.8 637.4 230.2 641.8 227 646.2 224.4 650.7 222.2 655.1 220.5 659.5 219.2 663.9 218.4 668.3 218 672.7 218 677.1 218.4 681.5 219 685.9 219.9 690.4 220.9 694.8 222.1 699.2 223.3 490.6 350 495 351.1 499.4 352.2 503.8 353.1 508.3 353.9 512.7 354.4 517.1 354.6 521.5 354.6 525.9 354.1 530.3 353.2 534.7 352 539.1 350.2 543.5 348 548 345.3 552.4 342.2 556.8 338.6 561.2 334.6 565.6 330.1 570 325.3 574.4 320.1 578.8 314.6 583.2 308.8 587.7 302.8 592.1 296.7 596.5 290.5 600.9 284.3 605.3 278.1 609.7 272 614.1 266 618.5 260.3 622.9 254.8 627.4 249.6 631.8 244.7 636.2 240.3 640.6 236.2 645 232.6 649.4 229.5 653.8 226.8 658.2 224.6 662.6 222.9 667.1 221.6 671.5 220.7 675.9 220.3 680.3 220.2 684.7 220.4 689.1 221 693.5 221.7 697.9 222.7 702.3 223.7 706.8 224.8 498.2 351.5 502.6 352.5 507 353.3 511.4 354.1 515.8 354.7 520.2 355 524.7 355.1 529.1 354.9 533.5 354.4 537.9 353.4 542.3 352.1 546.7 350.3 551.1 348.1 555.5 345.4 559.9 342.3 564.4 338.7 568.8 334.8 573.2 330.4 577.6 325.7 582 320.6 586.4 315.3 590.8 309.7 595.2 303.9 599.6 298 604.1 291.9 608.5 285.9 612.9 279.9 617.3 274 621.7 268.2 626.1 262.6 630.5 257.2 634.9 252.2 639.3 247.4 643.8 243.1 648.2 239.1 652.6 235.6 657 232.4 661.4 229.8 665.8 227.6 670.2 225.8 674.6 224.4 679 223.5 683.5 222.9 687.9 222.7 692.3 222.8 696.7 223.2 701.1 223.8 705.5 224.5 709.9 225.4 714.3 226.3 505.8 353 510.2 353.7 514.6 354.3 519 354.9 523.4 355.2 527.8 355.4 532.2 355.3 536.6 354.9 541.1 354.2 545.5 353.2 549.9 351.7 554.3 349.9 558.7 347.7 563.1 345 567.5 341.9 571.9 338.4 576.3 334.6 580.8 330.3 585.2 325.8 589.6 320.9 594 315.7 598.4 310.3 602.8 304.8 607.2 299.1 611.6 293.3 616 287.5 620.5 281.7 624.9 276 629.3 270.5 633.7 265.1 638.1 259.9 642.5 255.1 646.9 250.5 651.3 246.2 655.7 242.4 660.2 238.9 664.6 235.8 669 233.2 673.4 230.9 677.8 229.1 682.2 227.7 686.6 226.6 691 225.9 695.4 225.5 699.9 225.4 704.3 225.6 708.7 226 713.1 226.5 717.5 227.1 721.9 227.8 513.3 354.5 517.8 354.9 522.2 355.2 526.6 355.5 531 355.6 535.4 355.5 539.8 355.2 544.2 354.6 548.6 353.7 553 352.5 557.5 351 561.9 349.1 566.3 346.8 570.7 344.2 575.1 341.2 579.5 337.8 583.9 334 588.3 329.9 592.7 325.5 597.2 320.9 601.6 315.9 606 310.8 610.4 305.5 614.8 300.1 619.2 294.7 623.6 289.2 628 283.7 632.4 278.3 636.9 273 641.3 267.9 645.7 262.9 650.1 258.3 654.5 253.9 658.9 249.8 663.3 246 667.7 242.7 672.1 239.6 676.6 237 681 234.7 685.4 232.8 689.8 231.3 694.2 230.1 698.6 229.2 703 228.6 707.4 228.3 711.8 228.2 716.3 228.3 720.7 228.6 725.1 228.9 729.5 229.3 520.9 356 525.3 356.1 529.7 356 534.2 356 538.6 355.8 543 355.4 547.4 354.8 551.8 354 556.2 352.9 560.6 351.6 565 349.9 569.4 347.9 573.9 345.6 578.3 343 582.7 340 587.1 336.7 591.5 333.1 595.9 329.2 600.3 325 604.7 320.6 609.1 316 613.6 311.2 618 306.2 622.4 301.1 626.8 296 631.2 290.8 635.6 285.7 640 280.6 644.4 275.6 648.8 270.8 653.3 266.2 657.7 261.8 662.1 257.6 666.5 253.7 670.9 250.1 675.3 246.8 679.7 243.8 684.1 241.2 688.5 238.9 693 236.9 697.4 235.2 701.8 233.9 706.2 232.8 710.6 232 715 231.4 719.4 231 723.8 230.8 728.2 230.7 732.7 230.7 737.1 230.8 528.5 357.5 532.9 357.2 537.3 356.8 541.7 356.3 546.1 355.8 550.6 355.1 555 354.2 559.4 353.1 563.8 351.8 568.2 350.3 572.6 348.5 577 346.4 581.4 344.1 585.8 341.5 590.3 338.6 594.7 335.4 599.1 331.9 603.5 328.2 607.9 324.3 612.3 320.1 616.7 315.8 621.1 311.3 625.5 306.7 630 302 634.4 297.3 638.8 292.5 643.2 287.8 647.6 283.1 652 278.5 656.4 274 660.8 269.6 665.2 265.5 669.7 261.6 674.1 257.9 678.5 254.4 682.9 251.2 687.3 248.3 691.7 245.7 696.1 243.3 700.5 241.3 704.9 239.5 709.4 237.9 713.8 236.7 718.2 235.6 722.6 234.7 727 234 731.4 233.5 735.8 233 740.2 232.6 744.6 232.3 536.1 359 540.5 358.2 544.9 357.4 549.3 356.6 553.7 355.6 558.1 354.6 562.5 353.4 567 352 571.4 350.5 575.8 348.8 580.2 346.8 584.6 344.7 589 342.3 593.4 339.7 597.8 336.8 602.2 333.8 606.7 330.5 611.1 327 615.5 323.3 619.9 319.5 624.3 315.5 628.7 311.4 633.1 307.2 637.5 302.9 641.9 298.6 646.4 294.2 650.8 289.9 655.2 285.6 659.6 281.4 664 277.3 668.4 273.3 672.8 269.4 677.2 265.8 681.6 262.3 686.1 259 690.5 255.9 694.9 253.1 699.3 250.5 703.7 248.1 708.1 245.9 712.5 244 716.9 242.3 721.3 240.7 725.8 239.4 730.2 238.2 734.6 237.1 739 236.2 743.4 235.3 747.8 234.5 752.2 233.8 543.7 360.5 548.1 359.3 552.5 358 556.9 356.7 561.3 355.4 565.7 354 570.1 352.4 574.5 350.8 579 349 583.4 347 587.8 344.9 592.2 342.7 596.6 340.2 601 337.7 605.4 334.9 609.8 331.9 614.2 328.8 618.6 325.6 623.1 322.2 627.5 318.7 631.9 315.1 636.3 311.3 640.7 307.6 645.1 303.7 649.5 299.8 653.9 295.9 658.3 292.1 662.8 288.2 667.2 284.4 671.6 280.7 676 277.1 680.4 273.5 684.8 270.2 689.2 266.9 693.6 263.8 698 260.9 702.5 258.1 706.9 255.5 711.3 253.1 715.7 250.8 720.1 248.7 724.5 246.8 728.9 245 733.3 243.3 737.7 241.8 742.2 240.4 746.6 239 751 237.7 755.4 236.5 759.8 235.3 551.2 362 555.7 360.3 560.1 358.6 564.5 356.8 568.9 355.1 573.3 353.2 577.7 351.3 582.1 349.3 586.5 347.3 590.9 345.1 595.4 342.9 599.8 340.5 604.2 338 608.6 335.5 613 332.8 617.4 330 621.8 327.1 626.2 324.1 630.6 321 635.1 317.8 639.5 314.5 643.9 311.2 648.3 307.9 652.7 304.5 657.1 301.1 661.5 297.7 665.9 294.3 670.3 290.9 674.7 287.5 679.2 284.2 683.6 281 688 277.8 692.4 274.7 696.8 271.7 701.2 268.8 705.6 266 710 263.3 714.4 260.7 718.9 258.2 723.3 255.9 727.7 253.6 732.1 251.5 736.5 249.4 740.9 247.4 745.3 245.5 749.7 243.7 754.1 241.9 758.6 240.2 763 238.5 767.4 236.8 558.8 363.5 563.2 361.3 567.6 359.1 572.1 356.9 576.5 354.7 580.9 352.4 585.3 350.2 589.7 347.9 594.1 345.5 598.5 343.1 602.9 340.7 607.3 338.2 611.8 335.7 616.2 333.1 620.6 330.5 625 327.9 629.4 325.2 633.8 322.4 638.2 319.6 642.6 316.8 647 313.9 651.5 311.1 655.9 308.2 660.3 305.3 664.7 302.3 669.1 299.4 673.5 296.5 677.9 293.6 682.3 290.7 686.7 287.8 691.2 284.9 695.6 282.1 700 279.3 704.4 276.6 708.8 273.9 713.2 271.2 717.6 268.6 722 266 726.4 263.5 730.8 261 735.3 258.6 739.7 256.2 744.1 253.9 748.5 251.6 752.9 249.3 757.3 247.1 761.7 244.8 766.1 242.6 770.5 240.4 775 238.3 566.4 365 570.8 362.3 575.2 359.6 579.6 356.9 584 354.3 588.5 351.6 592.9 349 597.3 346.3 601.7 343.7 606.1 341.1 610.5 338.5 614.9 335.9 619.3 333.3 623.7 330.8 628.2 328.3 632.6 325.7 637 323.2 641.4 320.7 645.8 318.3 650.2 315.8 654.6 313.3 659 310.9 663.4 308.4 667.9 306 672.3 303.6 676.7 301.1 681.1 298.7 685.5 296.3 689.9 293.8 694.3 291.4 698.7 288.9 703.1 286.5 707.6 284 712 281.5 716.4 279 720.8 276.5 725.2 273.9 729.6 271.4 734 268.8 738.4 266.2 742.8 263.6 747.2 261 751.7 258.4 756.1 255.8 760.5 253.1 764.9 250.4 769.3 247.8 773.7 245.1 778.1 242.4 782.5 239.7 574 366.5 578.4 363.3 582.8 360.1 587.2 357 591.6 353.9 596 350.8 600.4 347.8 604.9 344.8 609.3 341.9 613.7 339.1 618.1 336.3 622.5 333.6 626.9 331 631.3 328.4 635.7 326 640.1 323.6 644.6 321.3 649 319.1 653.4 316.9 657.8 314.8 662.2 312.7 666.6 310.7 671 308.7 675.4 306.8 679.8 304.8 684.3 302.9 688.7 300.9 693.1 299 697.5 297 701.9 295 706.3 292.9 710.7 290.8 715.1 288.6 719.5 286.4 724 284.1 728.4 281.7 732.8 279.3 737.2 276.7 741.6 274.1 746 271.4 750.4 268.7 754.8 265.8 759.2 262.9 763.7 259.9 768.1 256.9 772.5 253.8 776.9 250.7 781.3 247.6 785.7 244.4 790.1 241.2 581.6 368 586 364.3 590.4 360.7 594.8 357.1 599.2 353.5 603.6 350 608 346.6 612.4 343.4 616.8 340.2 621.3 337.1 625.7 334.2 630.1 331.4 634.5 328.7 638.9 326.2 643.3 323.8 647.7 321.6 652.1 319.5 656.5 317.5 661 315.6 665.4 313.8 669.8 312.2 674.2 310.6 678.6 309 683 307.5 687.4 306.1 691.8 304.6 696.2 303.2 700.7 301.7 705.1 300.1 709.5 298.5 713.9 296.9 718.3 295.1 722.7 293.2 727.1 291.2 731.5 289.1 735.9 286.9 740.4 284.5 744.8 282 749.2 279.3 753.6 276.5 758 273.6 762.4 270.5 766.8 267.3 771.2 264 775.6 260.7 780.1 257.2 784.5 253.6 788.9 250 793.3 246.4 797.7 242.7 589.1 369.5 593.5 365.3 598 361.2 602.4 357.2 606.8 353.2 611.2 349.4 615.6 345.6 620 342 624.4 338.6 628.8 335.3 633.2 332.2 637.7 329.3 642.1 326.6 646.5 324.1 650.9 321.8 655.3 319.6 659.7 317.7 664.1 316 668.5 314.4 672.9 313 677.4 311.7 681.8 310.5 686.2 309.4 690.6 308.3 695 307.3 699.4 306.3 703.8 305.3 708.2 304.3 712.6 303.2 717.1 302 721.5 300.7 725.9 299.3 730.3 297.7 734.7 296 739.1 294 743.5 291.9 747.9 289.6 752.3 287.1 756.8 284.4 761.2 281.5 765.6 278.4 770 275.1 774.4 271.7 778.8 268.1 783.2 264.3 787.6 260.5 792 256.5 796.5 252.4 800.9 248.3 805.3 244.2 596.7 370.9 601.1 366.4 605.5 361.9 609.9 357.4 614.4 353 618.8 348.8 623.2 344.7 627.6 340.8 632 337.1 636.4 333.6 640.8 330.4 645.2 327.4 649.6 324.6 654.1 322.1 658.5 319.9 662.9 317.9 667.3 316.2 671.7 314.7 676.1 313.4 680.5 312.2 684.9 311.3 689.3 310.5 693.8 309.8 698.2 309.2 702.6 308.6 707 308.1 711.4 307.5 715.8 306.9 720.2 306.2 724.6 305.4 729 304.4 733.5 303.3 737.9 302 742.3 300.5 746.7 298.8 751.1 296.8 755.5 294.5 759.9 292 764.3 289.3 768.7 286.3 773.2 283 777.6 279.6 782 275.9 786.4 271.9 790.8 267.9 795.2 263.6 799.6 259.3 804 254.8 808.4 250.3 812.9 245.7 604.3 372.4 608.7 367.5 613.1 362.6 617.5 357.7 621.9 353 626.3 348.4 630.8 344 635.2 339.8 639.6 335.9 644 332.2 648.4 328.8 652.8 325.7 657.2 323 661.6 320.5 666 318.3 670.5 316.4 674.9 314.9 679.3 313.6 683.7 312.5 688.1 311.7 692.5 311.1 696.9 310.6 701.3 310.3 705.7 310.1 710.2 309.9 714.6 309.8 719 309.6 723.4 309.4 727.8 309.1 732.2 308.6 736.6 308 741 307.2 745.4 306.1 749.9 304.8 754.3 303.2 758.7 301.4 763.1 299.2 767.5 296.7 771.9 293.9 776.3 290.8 780.7 287.4 785.1 283.8 789.6 279.8 794 275.7 798.4 271.3 802.8 266.7 807.2 262 811.6 257.1 816 252.2 820.4 247.2 611.9 373.9 616.3 368.6 620.7 363.3 625.1 358.1 629.5 353.1 633.9 348.2 638.3 343.5 642.7 339.1 647.2 334.9 651.6 331.1 656 327.6 660.4 324.4 664.8 321.6 669.2 319.1 673.6 317 678 315.2 682.4 313.8 686.9 312.7 691.3 311.9 695.7 311.3 700.1 311 704.5 310.9 708.9 310.9 713.3 311 717.7 311.2 722.1 311.4 726.6 311.6 731 311.8 735.4 311.8 739.8 311.7 744.2 311.3 748.6 310.8 753 310 757.4 308.8 761.8 307.4 766.3 305.6 770.7 303.5 775.1 301.1 779.5 298.2 783.9 295.1 788.3 291.5 792.7 287.7 797.1 283.6 801.5 279.1 806 274.5 810.4 269.6 814.8 264.5 819.2 259.3 823.6 254 828 248.7 619.4 375.4 623.9 369.8 628.3 364.2 632.7 358.7 637.1 353.3 641.5 348.2 645.9 343.3 650.3 338.6 654.7 334.3 659.1 330.3 663.6 326.7 668 323.4 672.4 320.6 676.8 318.1 681.2 316.1 685.6 314.4 690 313.1 694.4 312.1 698.8 311.5 703.3 311.2 707.7 311.1 712.1 311.3 716.5 311.6 720.9 312 725.3 312.5 729.7 313.1 734.1 313.6 738.5 314.1 743 314.4 747.4 314.5 751.8 314.5 756.2 314.1 760.6 313.5 765 312.6 769.4 311.3 773.8 309.6 778.2 307.5 782.7 305.1 787.1 302.2 791.5 299 795.9 295.3 800.3 291.3 804.7 287 809.1 282.4 813.5 277.5 817.9 272.3 822.4 267 826.8 261.5 831.2 255.9 835.6 250.2 627 376.9 631.4 371 635.8 365.1 640.3 359.4 644.7 353.8 649.1 348.4 653.5 343.3 657.9 338.5 662.3 334 666.7 329.9 671.1 326.1 675.5 322.8 680 320 684.4 317.5 688.8 315.5 693.2 313.9 697.6 312.7 702 311.9 706.4 311.4 710.8 311.3 715.2 311.5 719.7 311.8 724.1 312.4 728.5 313.1 732.9 313.9 737.3 314.7 741.7 315.5 746.1 316.2 750.5 316.8 754.9 317.2 759.4 317.3 763.8 317.2 768.2 316.7 772.6 315.9 777 314.7 781.4 313.1 785.8 311.1 790.2 308.7 794.6 305.8 799.1 302.5 803.5 298.8 807.9 294.6 812.3 290.2 816.7 285.3 821.1 280.2 825.5 274.8 829.9 269.2 834.3 263.5 838.8 257.6 843.2 251.7 634.6 378.4 639 372.3 643.4 366.2 647.8 360.2 652.2 354.5 656.7 348.9 661.1 343.6 665.5 338.6 669.9 334 674.3 329.8 678.7 326 683.1 322.7 687.5 319.8 691.9 317.3 696.4 315.3 700.8 313.8 705.2 312.7 709.6 312 714 311.7 718.4 311.7 722.8 312 727.2 312.6 731.6 313.4 736.1 314.3 740.5 315.3 744.9 316.3 749.3 317.3 753.7 318.2 758.1 319 762.5 319.6 766.9 319.9 771.3 319.9 775.8 319.6 780.2 318.9 784.6 317.8 789 316.3 793.4 314.3 797.8 311.8 802.2 308.9 806.6 305.6 811 301.8 815.5 297.6 819.9 293 824.3 288 828.7 282.7 833.1 277.2 837.5 271.4 841.9 265.4 846.3 259.3 850.7 253.2 642.2 379.9 646.6 373.6 651 367.4 655.4 361.3 659.8 355.4 664.2 349.7 668.6 344.3 673.1 339.2 677.5 334.5 681.9 330.2 686.3 326.4 690.7 323 695.1 320 699.5 317.6 703.9 315.7 708.3 314.2 712.8 313.1 717.2 312.5 721.6 312.3 726 312.4 730.4 312.9 734.8 313.6 739.2 314.5 743.6 315.5 748 316.7 752.5 317.9 756.9 319.1 761.3 320.1 765.7 321 770.1 321.7 774.5 322.2 778.9 322.3 783.3 322.1 787.7 321.5 792.2 320.4 796.6 318.9 801 317 805.4 314.6 809.8 311.6 814.2 308.2 818.6 304.4 823 300.1 827.4 295.4 831.9 290.3 836.3 284.9 840.7 279.2 845.1 273.3 849.5 267.2 853.9 261 858.3 254.7 649.8 381.4 654.2 375 658.6 368.7 663 362.5 667.4 356.5 671.8 350.7 676.2 345.2 680.6 340.1 685 335.3 689.5 331 693.9 327.1 698.3 323.7 702.7 320.8 707.1 318.4 711.5 316.4 715.9 315 720.3 314 724.7 313.4 729.2 313.2 733.6 313.4 738 314 742.4 314.7 746.8 315.7 751.2 316.9 755.6 318.2 760 319.4 764.4 320.7 768.9 321.8 773.3 322.8 777.7 323.6 782.1 324.2 786.5 324.4 790.9 324.2 795.3 323.6 799.7 322.6 804.1 321.2 808.6 319.2 813 316.8 817.4 313.9 821.8 310.5 826.2 306.6 830.6 302.2 835 297.5 839.4 292.4 843.8 286.9 848.3 281.1 852.7 275.1 857.1 268.9 861.5 262.6 865.9 256.2 657.3 382.9 661.7 376.5 666.2 370.1 670.6 363.9 675 357.9 679.4 352.1 683.8 346.6 688.2 341.4 692.6 336.6 697 332.3 701.4 328.4 705.9 325 710.3 322 714.7 319.6 719.1 317.7 723.5 316.2 727.9 315.2 732.3 314.7 736.7 314.5 741.1 314.8 745.6 315.3 750 316.1 754.4 317.2 758.8 318.3 763.2 319.6 767.6 320.9 772 322.2 776.4 323.4 780.8 324.4 785.3 325.3 789.7 325.8 794.1 326 798.5 325.9 802.9 325.3 807.3 324.4 811.7 322.9 816.1 321 820.5 318.5 825 315.6 829.4 312.2 833.8 308.3 838.2 303.9 842.6 299.2 847 294 851.4 288.5 855.8 282.7 860.2 276.7 864.7 270.4 869.1 264.1 873.5 257.7" stroke="#00ff00" fill="none" stroke-width="1" stroke-dasharray="5.5 2" marker-start="url(#mg)" marker-mid="url(#mg)" marker-end="url(#mg)"/>
<path d="M484.5 194.7 488.9 192.1 493.3 189.6 497.7 187 502.1 184.5 293.6 307.3M483.3 198.5 487.7 195.7 492.1 192.8 496.5 190.1 500.9 187.4 505.3 184.7 509.7 182.1 301.2 305.1M482 204 486.4 200.6 490.8 197.4 495.2 194.2 499.7 191.1 504.1 188.1 508.5 185.2 512.9 182.5 517.3 179.9 308.7 303.1M485.2 207.5 489.6 203.7 494 199.9 498.4 196.3 502.8 192.8 507.2 189.5 511.6 186.3 516.1 183.3 520.5 180.5 524.9 177.9 316.3 301.4M483.9 216.3 488.3 211.9 492.8 207.7 497.2 203.5 501.6 199.4 506 195.5 510.4 191.8 514.8 188.2 519.2 184.9 523.6 181.7 528 178.8 532.5 176.1 323.9 300M482.7 226.8 487.1 222.1 491.5 217.3 495.9 212.6 500.3 208 504.7 203.5 509.2 199.1 513.6 194.9 518 190.9 522.4 187.2 526.8 183.7 531.2 180.4 535.6 177.4 540 174.7 331.5 298.9M485.9 233.6 490.3 228.6 494.7 223.5 499.1 218.4 503.5 213.4 507.9 208.4 512.3 203.6 516.7 199 521.1 194.5 525.6 190.3 530 186.4 534.4 182.7 538.8 179.4 543.2 176.4 547.6 173.6 339 298.1M484.6 246 489 240.9 493.4 235.6 497.8 230.3 502.3 224.9 506.7 219.5 511.1 214.2 515.5 209 519.9 203.9 524.3 199 528.7 194.4 533.1 190 537.5 185.9 542 182.1 546.4 178.7 550.8 175.6 555.2 172.8 346.6 297.5M483.4 258.6 487.8 253.7 492.2 248.5 496.6 243.1 501 237.6 505.4 232 509.8 226.3 514.2 220.7 518.7 215.1 523.1 209.7 527.5 204.4 531.9 199.3 536.3 194.4 540.7 189.9 545.1 185.6 549.5 181.8 553.9 178.2 558.4 175.1 562.8 172.3 354.2 297.3M482.1 270.7 486.5 266.2 490.9 261.3 495.4 256.2 499.8 250.8 504.2 245.2 508.6 239.5 513 233.6 517.4 227.8 521.8 221.9 526.2 216.1 530.6 210.4 535.1 205 539.5 199.7 543.9 194.7 548.3 190 552.7 185.6 557.1 181.6 561.5 178 565.9 174.8 570.3 172 361.8 297.2M485.3 277.8 489.7 273.5 494.1 268.9 498.5 263.9 502.9 258.6 507.3 253 511.8 247.2 516.2 241.3 520.6 235.3 525 229.2 529.4 223.1 533.8 217.2 538.2 211.3 542.6 205.6 547 200.2 551.5 195 555.9 190.2 560.3 185.7 564.7 181.7 569.1 178 573.5 174.8 577.9 172 369.4 297.3M484 288 488.5 284.5 492.9 280.5 497.3 276.2 501.7 271.4 506.1 266.3 510.5 260.8 514.9 255.1 519.3 249.2 523.7 243.1 528.2 236.9 532.6 230.7 537 224.4 541.4 218.3 545.8 212.2 550.2 206.4 554.6 200.8 559 195.5 563.4 190.6 567.9 186 572.3 181.9 576.7 178.1 581.1 174.9 585.5 172.1 376.9 297.6M482.8 296.3 487.2 293.7 491.6 290.7 496 287.1 500.4 283.1 504.9 278.7 509.3 273.8 513.7 268.6 518.1 263 522.5 257.2 526.9 251.1 531.3 244.9 535.7 238.5 540.1 232.1 544.6 225.7 549 219.4 553.4 213.2 557.8 207.3 562.2 201.6 566.6 196.2 571 191.1 575.4 186.5 579.8 182.2 584.3 178.5 588.7 175.2 593.1 172.4 384.5 298M486 300.9 490.4 298.8 494.8 296.3 499.2 293.2 503.6 289.7 508 285.6 512.4 281.1 516.8 276.1 521.3 270.8 525.7 265.1 530.1 259.2 534.5 253 538.9 246.6 543.3 240.1 547.7 233.6 552.1 227 556.5 220.6 561 214.3 565.4 208.2 569.8 202.4 574.2 196.9 578.6 191.7 583 187 587.4 182.7 591.8 178.9 596.2 175.6 600.7 172.8 392.1 298.5M484.7 305.9 489.1 304.8 493.6 303.3 498 301.3 502.4 298.7 506.8 295.7 511.2 292.1 515.6 288 520 283.4 524.4 278.4 528.8 273 533.2 267.2 537.7 261.1 542.1 254.8 546.5 248.3 550.9 241.7 555.3 235 559.7 228.4 564.1 221.8 568.5 215.4 572.9 209.2 577.4 203.3 581.8 197.7 586.2 192.5 590.6 187.7 595 183.3 599.4 179.5 603.8 176.1 608.2 173.3 399.7 299.1M483.5 308.6 487.9 308.6 492.3 308.1 496.7 307.2 501.1 305.7 505.5 303.7 510 301.1 514.4 298 518.8 294.4 523.2 290.2 527.6 285.6 532 280.5 536.4 275 540.8 269.2 545.2 263 549.7 256.6 554.1 250 558.5 243.3 562.9 236.5 567.3 229.7 571.7 223.1 576.1 216.5 580.5 210.2 584.9 204.2 589.3 198.5 593.8 193.2 598.2 188.4 602.6 184 607 180.1 611.4 176.8 615.8 173.9 407.3 299.9M482.2 309.5 486.7 310.3 491.1 310.7 495.5 310.8 499.9 310.3 504.3 309.4 508.7 307.9 513.1 305.9 517.5 303.4 521.9 300.3 526.4 296.6 530.8 292.4 535.2 287.8 539.6 282.6 544 277.1 548.4 271.1 552.8 264.9 557.2 258.4 561.6 251.7 566.1 244.8 570.5 238 574.9 231.1 579.3 224.3 583.7 217.7 588.1 211.3 592.5 205.2 596.9 199.5 601.3 194.1 605.8 189.2 610.2 184.8 614.6 180.9 619 177.5 623.4 174.6 414.8 300.6M485.4 310.1 489.8 311.4 494.2 312.3 498.6 312.8 503.1 312.9 507.5 312.5 511.9 311.6 516.3 310.1 520.7 308.1 525.1 305.6 529.5 302.5 533.9 298.8 538.3 294.6 542.8 289.9 547.2 284.7 551.6 279 556 273 560.4 266.7 564.8 260.1 569.2 253.3 573.6 246.4 578 239.4 582.5 232.5 586.9 225.6 591.3 218.9 595.7 212.5 600.1 206.3 604.5 200.5 608.9 195 613.3 190.1 617.7 185.6 622.2 181.7 626.6 178.3 631 175.4 422.4 301.5M484.2 308.6 488.6 310.4 493 311.9 497.4 313.2 501.8 314.2 506.2 314.8 510.6 314.9 515 314.5 519.5 313.7 523.9 312.3 528.3 310.3 532.7 307.7 537.1 304.6 541.5 300.9 545.9 296.6 550.3 291.9 554.7 286.6 559.2 281 563.6 274.9 568 268.5 572.4 261.8 576.8 255 581.2 248 585.6 240.9 590 233.9 594.4 226.9 598.9 220.2 603.3 213.6 607.7 207.4 612.1 201.5 616.5 196 620.9 191 625.3 186.5 629.7 182.5 634.1 179.1 638.6 176.3 430 302.4M482.9 306.3 487.3 308.3 491.7 310.2 496.2 312.1 500.6 313.7 505 315 509.4 316.1 513.8 316.7 518.2 316.9 522.6 316.6 527 315.7 531.4 314.3 535.9 312.4 540.3 309.8 544.7 306.7 549.1 302.9 553.5 298.7 557.9 293.9 562.3 288.6 566.7 282.8 571.1 276.7 575.6 270.3 580 263.5 584.4 256.6 588.8 249.5 593.2 242.4 597.6 235.3 602 228.3 606.4 221.4 610.8 214.8 615.3 208.5 619.7 202.6 624.1 197 628.5 192 632.9 187.5 637.3 183.5 641.7 180 646.1 177.2 437.6 303.4M481.7 303.7 486.1 305.7 490.5 307.7 494.9 309.8 499.3 311.9 503.7 313.7 508.1 315.4 512.6 316.8 517 317.9 521.4 318.6 525.8 318.8 530.2 318.5 534.6 317.7 539 316.3 543.4 314.4 547.8 311.8 552.3 308.7 556.7 304.9 561.1 300.6 565.5 295.8 569.9 290.5 574.3 284.7 578.7 278.5 583.1 272 587.5 265.2 592 258.2 596.4 251.1 600.8 243.9 605.2 236.7 609.6 229.6 614 222.7 618.4 216 622.8 209.7 627.2 203.7 631.7 198.1 636.1 193 640.5 188.5 644.9 184.4 649.3 181 653.7 178.1 445.1 304.4M484.8 303.2 489.3 305.1 493.7 307.1 498.1 309.2 502.5 311.4 506.9 313.5 511.3 315.4 515.7 317.2 520.1 318.6 524.5 319.7 529 320.5 533.4 320.7 537.8 320.5 542.2 319.7 546.6 318.3 551 316.4 555.4 313.8 559.8 310.6 564.2 306.9 568.7 302.6 573.1 297.7 577.5 292.3 581.9 286.5 586.3 280.3 590.7 273.7 595.1 266.9 599.5 259.8 603.9 252.6 608.4 245.3 612.8 238.1 617.2 231 621.6 224 626 217.3 630.4 210.9 634.8 204.8 639.2 199.2 643.6 194.1 648.1 189.5 652.5 185.5 656.9 182 661.3 179.1 452.7 305.4M483.6 301.5 488 302.9 492.4 304.5 496.8 306.4 501.2 308.5 505.7 310.7 510.1 312.9 514.5 315.1 518.9 317.1 523.3 318.9 527.7 320.4 532.1 321.5 536.5 322.3 540.9 322.6 545.4 322.4 549.8 321.6 554.2 320.3 558.6 318.3 563 315.7 567.4 312.6 571.8 308.8 576.2 304.5 580.6 299.6 585.1 294.2 589.5 288.3 593.9 282 598.3 275.4 602.7 268.5 607.1 261.4 611.5 254.1 615.9 246.8 620.3 239.5 624.8 232.3 629.2 225.3 633.6 218.5 638 212.1 642.4 206 646.8 200.3 651.2 195.2 655.6 190.6 660 186.5 664.5 183.1 668.9 180.2 460.3 306.5M482.4 301.2 486.8 301.7 491.2 302.7 495.6 304.1 500 305.9 504.4 307.8 508.8 310 513.2 312.2 517.6 314.4 522.1 316.6 526.5 318.7 530.9 320.5 535.3 322.1 539.7 323.3 544.1 324.1 548.5 324.4 552.9 324.2 557.3 323.5 561.8 322.2 566.2 320.2 570.6 317.7 575 314.5 579.4 310.7 583.8 306.3 588.2 301.4 592.6 296 597 290.1 601.5 283.8 605.9 277.1 610.3 270.1 614.7 263 619.1 255.7 623.5 248.3 627.9 241 632.3 233.7 636.7 226.6 641.2 219.8 645.6 213.3 650 207.2 654.4 201.5 658.8 196.3 663.2 191.7 667.6 187.6 672 184.1 676.4 181.3 467.9 307.6M485.5 302.3 489.9 302.4 494.3 303 498.8 304 503.2 305.4 507.6 307.2 512 309.2 516.4 311.4 520.8 313.7 525.2 316 529.6 318.2 534 320.3 538.5 322.2 542.9 323.8 547.3 325.1 551.7 325.9 556.1 326.2 560.5 326.1 564.9 325.3 569.3 324 573.7 322.1 578.2 319.5 582.6 316.4 587 312.6 591.4 308.2 595.8 303.2 600.2 297.8 604.6 291.8 609 285.5 613.4 278.8 617.9 271.8 622.3 264.6 626.7 257.2 631.1 249.8 635.5 242.4 639.9 235.1 644.3 228 648.7 221.1 653.1 214.6 657.6 208.4 662 202.7 666.4 197.5 670.8 192.8 675.2 188.7 679.6 185.2 684 182.4 475.5 308.7M484.3 304.9 488.7 303.9 493.1 303.4 497.5 303.6 501.9 304.2 506.3 305.3 510.7 306.7 515.2 308.5 519.6 310.6 524 312.8 528.4 315.2 532.8 317.5 537.2 319.8 541.6 321.9 546 323.9 550.4 325.5 554.9 326.8 559.3 327.7 563.7 328 568.1 327.9 572.5 327.2 576.9 325.9 581.3 323.9 585.7 321.4 590.1 318.2 594.6 314.4 599 310 603.4 305 607.8 299.5 612.2 293.6 616.6 287.2 621 280.4 625.4 273.4 629.8 266.1 634.3 258.7 638.7 251.3 643.1 243.8 647.5 236.5 651.9 229.3 656.3 222.4 660.7 215.8 665.1 209.6 669.5 203.9 674 198.7 678.4 194 682.8 189.9 687.2 186.4 691.6 183.5 483 309.9 487.4 307.7 491.9 306.1 496.3 305.1 500.7 304.7 505.1 304.8 509.5 305.5 513.9 306.6 518.3 308.1 522.7 309.9 527.1 312 531.6 314.3 536 316.6 540.4 319 544.8 321.4 549.2 323.6 553.6 325.5 558 327.2 562.4 328.5 566.8 329.4 571.3 329.8 575.7 329.7 580.1 329 584.5 327.7 588.9 325.8 593.3 323.2 597.7 320 602.1 316.2 606.5 311.8 611 306.8 615.4 301.3 619.8 295.3 624.2 288.9 628.6 282.1 633 275 637.4 267.7 641.8 260.2 646.2 252.7 650.7 245.3 655.1 237.9 659.5 230.7 663.9 223.7 668.3 217.1 672.7 210.9 677.1 205.1 681.5 199.9 685.9 195.2 690.4 191.1 694.8 187.6 699.2 184.7 490.6 311.1 495 308.9 499.4 307.3 503.8 306.3 508.3 305.9 512.7 306 517.1 306.7 521.5 307.9 525.9 309.4 530.3 311.3 534.7 313.4 539.1 315.7 543.5 318.1 548 320.6 552.4 322.9 556.8 325.2 561.2 327.2 565.6 328.9 570 330.2 574.4 331.1 578.8 331.6 583.2 331.5 587.7 330.8 592.1 329.5 596.5 327.6 600.9 325 605.3 321.8 609.7 318 614.1 313.6 618.5 308.6 622.9 303 627.4 297 631.8 290.5 636.2 283.7 640.6 276.6 645 269.3 649.4 261.8 653.8 254.2 658.2 246.7 662.6 239.3 667.1 232 671.5 225.1 675.9 218.4 680.3 212.2 684.7 206.4 689.1 201.1 693.5 196.4 697.9 192.2 702.3 188.7 706.8 185.9 498.2 312.3 502.6 310.1 507 308.5 511.4 307.5 515.8 307.1 520.2 307.3 524.7 308 529.1 309.2 533.5 310.7 537.9 312.6 542.3 314.8 546.7 317.2 551.1 319.6 555.5 322.1 559.9 324.5 564.4 326.7 568.8 328.8 573.2 330.5 577.6 331.9 582 332.8 586.4 333.3 590.8 333.2 595.2 332.5 599.6 331.3 604.1 329.3 608.5 326.8 612.9 323.6 617.3 319.8 621.7 315.3 626.1 310.3 630.5 304.7 634.9 298.7 639.3 292.2 643.8 285.3 648.2 278.2 652.6 270.8 657 263.3 661.4 255.7 665.8 248.2 670.2 240.7 674.6 233.4 679 226.4 683.5 219.7 687.9 213.5 692.3 207.6 696.7 202.3 701.1 197.6 705.5 193.5 709.9 189.9 714.3 187.1 505.8 313.5 510.2 311.3 514.6 309.7 519 308.7 523.4 308.4 527.8 308.6 532.2 309.3 536.6 310.5 541.1 312.1 545.5 314 549.9 316.2 554.3 318.6 558.7 321.1 563.1 323.6 567.5 326 571.9 328.3 576.3 330.4 580.8 332.2 585.2 333.6 589.6 334.5 594 335 598.4 334.9 602.8 334.3 607.2 333 611.6 331.1 616 328.6 620.5 325.4 624.9 321.5 629.3 317.1 633.7 312 638.1 306.4 642.5 300.4 646.9 293.8 651.3 287 655.7 279.8 660.2 272.4 664.6 264.8 669 257.2 673.4 249.6 677.8 242.1 682.2 234.8 686.6 227.8 691 221.1 695.4 214.8 699.9 208.9 704.3 203.6 708.7 198.8 713.1 194.7 717.5 191.2 721.9 188.3 513.3 314.8 517.8 312.5 522.2 310.9 526.6 310 531 309.7 535.4 309.9 539.8 310.6 544.2 311.8 548.6 313.5 553 315.4 557.5 317.6 561.9 320.1 566.3 322.6 570.7 325.1 575.1 327.6 579.5 329.9 583.9 332 588.3 333.8 592.7 335.2 597.2 336.2 601.6 336.7 606 336.7 610.4 336 614.8 334.8 619.2 332.9 623.6 330.3 628 327.1 632.4 323.2 636.9 318.8 641.3 313.7 645.7 308.1 650.1 302 654.5 295.5 658.9 288.6 663.3 281.4 667.7 273.9 672.1 266.3 676.6 258.7 681 251.1 685.4 243.5 689.8 236.2 694.2 229.1 698.6 222.4 703 216.1 707.4 210.2 711.8 204.9 716.3 200.1 720.7 195.9 725.1 192.4 729.5 189.5 520.9 316 525.3 313.8 529.7 312.2 534.2 311.3 538.6 310.9 543 311.2 547.4 311.9 551.8 313.2 556.2 314.8 560.6 316.8 565 319.1 569.4 321.5 573.9 324.1 578.3 326.6 582.7 329.1 587.1 331.5 591.5 333.6 595.9 335.4 600.3 336.9 604.7 337.9 609.1 338.4 613.6 338.4 618 337.7 622.4 336.5 626.8 334.6 631.2 332 635.6 328.8 640 325 644.4 320.5 648.8 315.4 653.3 309.8 657.7 303.7 662.1 297.1 666.5 290.2 670.9 282.9 675.3 275.5 679.7 267.8 684.1 260.2 688.5 252.5 693 245 697.4 237.6 701.8 230.5 706.2 223.7 710.6 217.4 715 211.5 719.4 206.2 723.8 201.4 728.2 197.2 732.7 193.7 737.1 190.8 528.5 317.3 532.9 315.1 537.3 313.5 541.7 312.6 546.1 312.2 550.6 312.5 555 313.3 559.4 314.5 563.8 316.2 568.2 318.2 572.6 320.5 577 323 581.4 325.5 585.8 328.1 590.3 330.7 594.7 333.1 599.1 335.2 603.5 337.1 607.9 338.5 612.3 339.6 616.7 340.1 621.1 340.1 625.5 339.5 630 338.2 634.4 336.3 638.8 333.7 643.2 330.5 647.6 326.7 652 322.2 656.4 317.1 660.8 311.5 665.2 305.3 669.7 298.7 674.1 291.8 678.5 284.5 682.9 277 687.3 269.4 691.7 261.7 696.1 254 700.5 246.4 704.9 239 709.4 231.9 713.8 225.1 718.2 218.7 722.6 212.8 727 207.5 731.4 202.7 735.8 198.5 740.2 194.9 744.6 192.1 536.1 318.6 540.5 316.3 544.9 314.8 549.3 313.9 553.7 313.5 558.1 313.8 562.5 314.6 567 315.9 571.4 317.6 575.8 319.6 580.2 321.9 584.6 324.4 589 327 593.4 329.7 597.8 332.2 602.2 334.6 606.7 336.8 611.1 338.7 615.5 340.2 619.9 341.2 624.3 341.8 628.7 341.8 633.1 341.1 637.5 339.9 641.9 338 646.4 335.5 650.8 332.2 655.2 328.4 659.6 323.9 664 318.8 668.4 313.1 672.8 307 677.2 300.3 681.6 293.4 686.1 286.1 690.5 278.5 694.9 270.9 699.3 263.1 703.7 255.4 708.1 247.8 712.5 240.4 716.9 233.3 721.3 226.5 725.8 220.1 730.2 214.2 734.6 208.8 739 204 743.4 199.8 747.8 196.2 752.2 193.3 543.7 319.9 548.1 317.6 552.5 316.1 556.9 315.2 561.3 314.9 565.7 315.2 570.1 316 574.5 317.3 579 319 583.4 321 587.8 323.4 592.2 325.9 596.6 328.5 601 331.2 605.4 333.8 609.8 336.2 614.2 338.4 618.6 340.3 623.1 341.8 627.5 342.9 631.9 343.4 636.3 343.4 640.7 342.8 645.1 341.6 649.5 339.7 653.9 337.1 658.3 333.9 662.8 330 667.2 325.5 671.6 320.4 676 314.8 680.4 308.6 684.8 302 689.2 294.9 693.6 287.6 698 280.1 702.5 272.4 706.9 264.6 711.3 256.9 715.7 249.3 720.1 241.8 724.5 234.7 728.9 227.8 733.3 221.4 737.7 215.5 742.2 210.1 746.6 205.3 751 201.1 755.4 197.5 759.8 194.6 551.2 321.2 555.7 318.9 560.1 317.4 564.5 316.5 568.9 316.2 573.3 316.5 577.7 317.3 582.1 318.6 586.5 320.4 590.9 322.5 595.4 324.8 599.8 327.4 604.2 330 608.6 332.7 613 335.3 617.4 337.7 621.8 340 626.2 341.9 630.6 343.4 635.1 344.5 639.5 345.1 643.9 345.1 648.3 344.5 652.7 343.3 657.1 341.4 661.5 338.8 665.9 335.6 670.3 331.7 674.7 327.2 679.2 322.1 683.6 316.4 688 310.2 692.4 303.6 696.8 296.5 701.2 289.2 705.6 281.6 710 273.9 714.4 266.1 718.9 258.4 723.3 250.7 727.7 243.2 732.1 236 736.5 229.2 740.9 222.8 745.3 216.8 749.7 211.4 754.1 206.6 758.6 202.4 763 198.8 767.4 195.9 558.8 322.5 563.2 320.3 567.6 318.7 572.1 317.8 576.5 317.5 580.9 317.8 585.3 318.7 589.7 320 594.1 321.8 598.5 323.9 602.9 326.3 607.3 328.8 611.8 331.5 616.2 334.2 620.6 336.8 625 339.3 629.4 341.6 633.8 343.5 638.2 345 642.6 346.1 647 346.7 651.5 346.7 655.9 346.2 660.3 344.9 664.7 343.1 669.1 340.5 673.5 337.3 677.9 333.4 682.3 328.9 686.7 323.7 691.2 318 695.6 311.8 700 305.2 704.4 298.1 708.8 290.7 713.2 283.2 717.6 275.4 722 267.6 726.4 259.8 730.8 252.1 735.3 244.7 739.7 237.4 744.1 230.6 748.5 224.1 752.9 218.2 757.3 212.8 761.7 207.9 766.1 203.7 770.5 200.2 775 197.3 566.4 323.8 570.8 321.6 575.2 320 579.6 319.1 584 318.9 588.5 319.2 592.9 320.1 597.3 321.4 601.7 323.2 606.1 325.3 610.5 327.7 614.9 330.3 619.3 333 623.7 335.7 628.2 338.4 632.6 340.9 637 343.1 641.4 345.1 645.8 346.6 650.2 347.8 654.6 348.4 659 348.4 663.4 347.8 667.9 346.6 672.3 344.7 676.7 342.2 681.1 338.9 685.5 335 689.9 330.5 694.3 325.4 698.7 319.6 703.1 313.4 707.6 306.7 712 299.7 716.4 292.3 720.8 284.7 725.2 276.9 729.6 269.1 734 261.3 738.4 253.6 742.8 246.1 747.2 238.9 751.7 232 756.1 225.5 760.5 219.5 764.9 214.1 769.3 209.3 773.7 205 778.1 201.5 782.5 198.6 574 325.1 578.4 322.9 582.8 321.4 587.2 320.5 591.6 320.2 596 320.6 600.4 321.4 604.9 322.8 609.3 324.6 613.7 326.7 618.1 329.2 622.5 331.8 626.9 334.5 631.3 337.2 635.7 339.9 640.1 342.4 644.6 344.7 649 346.7 653.4 348.2 657.8 349.4 662.2 350 666.6 350 671 349.5 675.4 348.3 679.8 346.4 684.3 343.8 688.7 340.6 693.1 336.7 697.5 332.1 701.9 327 706.3 321.3 710.7 315 715.1 308.3 719.5 301.2 724 293.8 728.4 286.2 732.8 278.4 737.2 270.6 741.6 262.8 746 255 750.4 247.5 754.8 240.3 759.2 233.4 763.7 226.9 768.1 220.9 772.5 215.5 776.9 210.6 781.3 206.4 785.7 202.8 790.1 199.9 581.6 326.5 586 324.3 590.4 322.7 594.8 321.8 599.2 321.6 603.6 321.9 608 322.8 612.4 324.2 616.8 326 621.3 328.2 625.7 330.6 630.1 333.2 634.5 336 638.9 338.7 643.3 341.4 647.7 344 652.1 346.3 656.5 348.2 661 349.8 665.4 351 669.8 351.6 674.2 351.7 678.6 351.1 683 349.9 687.4 348 691.8 345.5 696.2 342.2 700.7 338.3 705.1 333.8 709.5 328.6 713.9 322.9 718.3 316.6 722.7 309.9 727.1 302.8 731.5 295.4 735.9 287.7 740.4 279.9 744.8 272.1 749.2 264.2 753.6 256.5 758 248.9 762.4 241.7 766.8 234.8 771.2 228.3 775.6 222.3 780.1 216.8 784.5 212 788.9 207.7 793.3 204.2 797.7 201.3 589.1 327.8 593.5 325.6 598 324.1 602.4 323.2 606.8 323 611.2 323.3 615.6 324.2 620 325.6 624.4 327.4 628.8 329.6 633.2 332.1 637.7 334.7 642.1 337.5 646.5 340.2 650.9 342.9 655.3 345.5 659.7 347.8 664.1 349.8 668.5 351.4 672.9 352.6 677.4 353.2 681.8 353.3 686.2 352.7 690.6 351.5 695 349.7 699.4 347.1 703.8 343.9 708.2 340 712.6 335.4 717.1 330.2 721.5 324.5 725.9 318.2 730.3 311.5 734.7 304.4 739.1 296.9 743.5 289.3 747.9 281.4 752.3 273.6 756.8 265.7 761.2 257.9 765.6 250.4 770 243.1 774.4 236.2 778.8 229.7 783.2 223.7 787.6 218.2 792 213.3 796.5 209.1 800.9 205.5 805.3 202.6 596.7 329.2 601.1 327 605.5 325.4 609.9 324.6 614.4 324.3 618.8 324.7 623.2 325.6 627.6 327 632 328.9 636.4 331 640.8 333.5 645.2 336.2 649.6 338.9 654.1 341.7 658.5 344.5 662.9 347 667.3 349.4 671.7 351.4 676.1 353 680.5 354.2 684.9 354.8 689.3 354.9 693.8 354.4 698.2 353.2 702.6 351.3 707 348.7 711.4 345.5 715.8 341.6 720.2 337 724.6 331.8 729 326.1 733.5 319.8 737.9 313.1 742.3 305.9 746.7 298.5 751.1 290.8 755.5 283 759.9 275.1 764.3 267.2 768.7 259.4 773.2 251.8 777.6 244.5 782 237.6 786.4 231.1 790.8 225 795.2 219.6 799.6 214.7 804 210.4 808.4 206.9 812.9 204 604.3 330.5 608.7 328.3 613.1 326.8 617.5 325.9 621.9 325.7 626.3 326.1 630.8 327 635.2 328.4 639.6 330.3 644 332.5 648.4 335 652.8 337.6 657.2 340.4 661.6 343.2 666 346 670.5 348.6 674.9 350.9 679.3 353 683.7 354.6 688.1 355.8 692.5 356.4 696.9 356.5 701.3 356 705.7 354.8 710.2 352.9 714.6 350.4 719 347.1 723.4 343.2 727.8 338.6 732.2 333.4 736.6 327.7 741 321.4 745.4 314.6 749.9 307.5 754.3 300 758.7 292.3 763.1 284.5 767.5 276.5 771.9 268.6 776.3 260.9 780.7 253.3 785.1 245.9 789.6 239 794 232.5 798.4 226.4 802.8 220.9 807.2 216.1 811.6 211.8 816 208.2 820.4 205.3 611.9 331.9 616.3 329.7 620.7 328.2 625.1 327.3 629.5 327.1 633.9 327.5 638.3 328.4 642.7 329.8 647.2 331.7 651.6 333.9 656 336.4 660.4 339.1 664.8 341.9 669.2 344.7 673.6 347.5 678 350.1 682.4 352.5 686.9 354.5 691.3 356.2 695.7 357.4 700.1 358 704.5 358.1 708.9 357.6 713.3 356.4 717.7 354.5 722.1 352 726.6 348.7 731 344.8 735.4 340.2 739.8 335 744.2 329.3 748.6 323 753 316.2 757.4 309 761.8 301.6 766.3 293.8 770.7 286 775.1 278 779.5 270.1 783.9 262.3 788.3 254.7 792.7 247.4 797.1 240.4 801.5 233.9 806 227.8 810.4 222.3 814.8 217.4 819.2 213.2 823.6 209.6 828 206.7 619.4 333.3 623.9 331.1 628.3 329.6 632.7 328.7 637.1 328.5 641.5 328.9 645.9 329.8 650.3 331.3 654.7 333.1 659.1 335.4 663.6 337.9 668 340.6 672.4 343.4 676.8 346.3 681.2 349 685.6 351.6 690 354 694.4 356.1 698.8 357.8 703.3 359 707.7 359.6 712.1 359.7 716.5 359.2 720.9 358 725.3 356.1 729.7 353.6 734.1 350.3 738.5 346.4 743 341.8 747.4 336.6 751.8 330.8 756.2 324.5 760.6 317.8 765 310.6 769.4 303.1 773.8 295.4 778.2 287.5 782.7 279.5 787.1 271.6 791.5 263.8 795.9 256.1 800.3 248.8 804.7 241.8 809.1 235.3 813.5 229.2 817.9 223.7 822.4 218.8 826.8 214.6 831.2 211 835.6 208.1 627 334.7 631.4 332.5 635.8 330.9 640.3 330.1 644.7 329.9 649.1 330.3 653.5 331.2 657.9 332.7 662.3 334.6 666.7 336.8 671.1 339.3 675.5 342.1 680 344.9 684.4 347.8 688.8 350.5 693.2 353.2 697.6 355.6 702 357.7 706.4 359.3 710.8 360.5 715.2 361.2 719.7 361.3 724.1 360.8 728.5 359.6 732.9 357.8 737.3 355.2 741.7 352 746.1 348 750.5 343.4 754.9 338.2 759.4 332.4 763.8 326.1 768.2 319.3 772.6 312.1 777 304.6 781.4 296.9 785.8 289 790.2 281 794.6 273.1 799.1 265.2 803.5 257.6 807.9 250.2 812.3 243.2 816.7 236.7 821.1 230.6 825.5 225.1 829.9 220.2 834.3 215.9 838.8 212.3 843.2 209.4 634.6 336.1 639 333.8 643.4 332.3 647.8 331.5 652.2 331.3 656.7 331.7 661.1 332.7 665.5 334.1 669.9 336 674.3 338.3 678.7 340.8 683.1 343.5 687.5 346.4 691.9 349.3 696.4 352.1 700.8 354.7 705.2 357.1 709.6 359.2 714 360.9 718.4 362.1 722.8 362.8 727.2 362.9 731.6 362.4 736.1 361.2 740.5 359.4 744.9 356.8 749.3 353.6 753.7 349.6 758.1 345 762.5 339.8 766.9 334 771.3 327.7 775.8 320.9 780.2 313.7 784.6 306.2 789 298.4 793.4 290.5 797.8 282.5 802.2 274.5 806.6 266.7 811 259 815.5 251.7 819.9 244.7 824.3 238.1 828.7 232 833.1 226.5 837.5 221.6 841.9 217.3 846.3 213.7 850.7 210.8 642.2 337.4 646.6 335.2 651 333.7 655.4 332.9 659.8 332.7 664.2 333.1 668.6 334.1 673.1 335.5 677.5 337.4 681.9 339.7 686.3 342.3 690.7 345 695.1 347.9 699.5 350.8 703.9 353.6 708.3 356.2 712.8 358.7 717.2 360.8 721.6 362.5 726 363.7 730.4 364.4 734.8 364.5 739.2 364 743.6 362.8 748 361 752.5 358.4 756.9 355.2 761.3 351.2 765.7 346.6 770.1 341.4 774.5 335.6 778.9 329.2 783.3 322.4 787.7 315.2 792.2 307.7 796.6 299.9 801 292 805.4 284 809.8 276 814.2 268.2 818.6 260.5 823 253.1 827.4 246.1 831.9 239.5 836.3 233.4 840.7 227.9 845.1 223 849.5 218.7 853.9 215.1 858.3 212.2 649.8 338.8 654.2 336.6 658.6 335.1 663 334.3 667.4 334.1 671.8 334.5 676.2 335.5 680.6 337 685 338.9 689.5 341.2 693.9 343.7 698.3 346.5 702.7 349.4 707.1 352.3 711.5 355.1 715.9 357.8 720.3 360.2 724.7 362.3 729.2 364 733.6 365.3 738 366 742.4 366.1 746.8 365.6 751.2 364.4 755.6 362.6 760 360 764.4 356.7 768.9 352.8 773.3 348.2 777.7 343 782.1 337.2 786.5 330.8 790.9 324 795.3 316.8 799.7 309.2 804.1 301.4 808.6 293.5 813 285.5 817.4 277.5 821.8 269.6 826.2 261.9 830.6 254.6 835 247.5 839.4 240.9 843.8 234.8 848.3 229.3 852.7 224.4 857.1 220.1 861.5 216.5 865.9 213.6 657.3 340.2 661.7 338 666.2 336.5 670.6 335.7 675 335.5 679.4 335.9 683.8 336.9 688.2 338.4 692.6 340.3 697 342.6 701.4 345.2 705.9 348 710.3 350.9 714.7 353.8 719.1 356.6 723.5 359.3 727.9 361.7 732.3 363.9 736.7 365.6 741.1 366.8 745.6 367.5 750 367.7 754.4 367.2 758.8 366 763.2 364.1 767.6 361.6 772 358.3 776.4 354.4 780.8 349.8 785.3 344.5 789.7 338.7 794.1 332.4 798.5 325.5 802.9 318.3 807.3 310.7 811.7 302.9 816.1 295 820.5 287 825 279 829.4 271.1 833.8 263.4 838.2 256 842.6 249 847 242.4 851.4 236.3 855.8 230.7 860.2 225.8 864.7 221.5 869.1 217.9 873.5 215" stroke="#0000ff" fill="none" stroke-width="1" stroke-dasharray="3.2 3" marker-start="url(#mb)" marker-mid="url(#mb)" marker-end="url(#mb)"/>
<path d="M484.5 194.7 488.9 192.1 493.3 189.6 497.7 187 502.1 184.5 293.6 300.4M483.3 193.5 487.7 190.1 492.1 186.8 496.5 183.6 500.9 180.6 505.3 177.8 509.7 175.2 301.2 297.4M482 200 486.4 195.8 490.8 191.8 495.2 188 499.7 184.4 504.1 181 508.5 177.8 512.9 174.9 517.3 172.2 308.7 295.5M485.2 204.4 489.6 199.7 494 195.2 498.4 190.8 502.8 186.7 507.2 182.9 511.6 179.3 516.1 176 520.5 172.9 524.9 170.2 316.3 294M483.9 215.1 488.3 209.9 492.8 204.7 497.2 199.7 501.6 194.9 506 190.2 510.4 185.9 514.8 181.8 519.2 178.1 523.6 174.6 528 171.6 532.5 168.8 323.9 293M482.7 227.5 487.1 221.8 491.5 216.2 495.9 210.6 500.3 205.2 504.7 199.9 509.2 194.8 513.6 189.9 518 185.3 522.4 181.1 526.8 177.2 531.2 173.7 535.6 170.5 540 167.8 331.5 292.2M485.9 235.1 490.3 229.2 494.7 223.3 499.1 217.3 503.5 211.5 507.9 205.7 512.3 200.2 516.7 194.8 521.1 189.7 525.6 185 530 180.6 534.4 176.6 538.8 172.9 543.2 169.7 547.6 166.9 339 291.5M484.6 249.1 489 243.1 493.4 237.1 497.8 230.9 502.3 224.7 506.7 218.5 511.1 212.3 515.5 206.4 519.9 200.5 524.3 195 528.7 189.7 533.1 184.8 537.5 180.2 542 176.1 546.4 172.4 550.8 169.1 555.2 166.3 346.6 291.1M483.4 263 487.8 257.4 492.2 251.5 496.6 245.3 501 239 505.4 232.6 509.8 226.1 514.2 219.7 518.7 213.3 523.1 207 527.5 201 531.9 195.2 536.3 189.8 540.7 184.7 545.1 180 549.5 175.7 553.9 172 558.4 168.6 562.8 165.8 354.2 290.7M482.1 276.2 486.5 271.2 490.9 265.7 495.4 259.9 499.8 253.8 504.2 247.5 508.6 240.9 513 234.3 517.4 227.5 521.8 220.9 526.2 214.2 530.6 207.8 535.1 201.5 539.5 195.6 543.9 189.9 548.3 184.7 552.7 179.9 557.1 175.5 561.5 171.7 565.9 168.3 570.3 165.5 361.8 290.4M485.3 283.9 489.7 279.2 494.1 274 498.5 268.4 502.9 262.4 507.3 256.1 511.8 249.6 516.2 242.8 520.6 235.9 525 229 529.4 222.1 533.8 215.2 538.2 208.6 542.6 202.1 547 196 551.5 190.2 555.9 184.8 560.3 179.8 564.7 175.4 569.1 171.4 573.5 168.1 577.9 165.2 369.4 290.3M484 294.9 488.5 291.2 492.9 286.9 497.3 282.1 501.7 276.8 506.1 271 510.5 264.9 514.9 258.4 519.3 251.6 523.7 244.7 528.2 237.6 532.6 230.4 537 223.3 541.4 216.3 545.8 209.4 550.2 202.8 554.6 196.4 559 190.5 563.4 184.9 567.9 179.9 572.3 175.3 576.7 171.3 581.1 167.9 585.5 165 376.9 290.2M482.8 303.7 487.2 301.1 491.6 298 496 294.2 500.4 289.8 504.9 284.9 509.3 279.5 513.7 273.6 518.1 267.3 522.5 260.6 526.9 253.7 531.3 246.5 535.7 239.2 540.1 231.9 544.6 224.5 549 217.3 553.4 210.2 557.8 203.4 562.2 196.9 566.6 190.8 571 185.2 575.4 180 579.8 175.3 584.3 171.3 588.7 167.8 593.1 164.9 384.5 290.1M486 308.6 490.4 306.7 494.8 304.1 499.2 300.9 503.6 297.1 508 292.7 512.4 287.7 516.8 282.1 521.3 276.1 525.7 269.6 530.1 262.8 534.5 255.7 538.9 248.4 543.3 240.9 547.7 233.3 552.1 225.8 556.5 218.4 561 211.1 565.4 204.1 569.8 197.5 574.2 191.2 578.6 185.4 583 180.1 587.4 175.4 591.8 171.3 596.2 167.8 600.7 164.9 392.1 290.2M484.7 313.4 489.1 312.8 493.6 311.6 498 309.7 502.4 307.1 506.8 303.9 511.2 300 515.6 295.5 520 290.4 524.4 284.8 528.8 278.6 533.2 272 537.7 265 542.1 257.7 546.5 250.2 550.9 242.5 555.3 234.8 559.7 227 564.1 219.4 568.5 212 572.9 204.9 577.4 198.1 581.8 191.7 586.2 185.7 590.6 180.4 595 175.6 599.4 171.4 603.8 167.8 608.2 164.9 399.7 290.2M483.5 315.4 487.9 316.1 492.3 316.2 496.7 315.6 501.1 314.4 505.5 312.6 510 310 514.4 306.8 518.8 302.9 523.2 298.3 527.6 293.1 532 287.3 536.4 281 540.8 274.3 545.2 267.1 549.7 259.7 554.1 252 558.5 244.1 562.9 236.2 567.3 228.3 571.7 220.5 576.1 212.9 580.5 205.6 584.9 198.7 589.3 192.1 593.8 186.1 598.2 180.6 602.6 175.7 607 171.5 611.4 167.9 615.8 165 407.3 290.3M482.2 314.9 486.7 316.7 491.1 318 495.5 318.7 499.9 318.9 504.3 318.4 508.7 317.3 513.1 315.4 517.5 312.9 521.9 309.6 526.4 305.7 530.8 301 535.2 295.7 539.6 289.9 544 283.5 548.4 276.6 552.8 269.3 557.2 261.7 561.6 253.8 566.1 245.8 570.5 237.7 574.9 229.6 579.3 221.6 583.7 213.9 588.1 206.4 592.5 199.3 596.9 192.6 601.3 186.5 605.8 180.9 610.2 175.9 614.6 171.6 619 168 623.4 165.1 414.8 290.5M485.4 314.8 489.8 317.2 494.2 319.1 498.6 320.5 503.1 321.4 507.5 321.6 511.9 321.2 516.3 320.1 520.7 318.3 525.1 315.7 529.5 312.4 533.9 308.4 538.3 303.7 542.8 298.4 547.2 292.4 551.6 285.8 556 278.8 560.4 271.4 564.8 263.6 569.2 255.6 573.6 247.4 578 239.1 582.5 230.9 586.9 222.7 591.3 214.8 595.7 207.2 600.1 200 604.5 193.2 608.9 186.9 613.3 181.2 617.7 176.2 622.2 171.9 626.6 168.2 631 165.3 422.4 290.7M484.2 311 488.6 314.1 493 316.9 497.4 319.4 501.8 321.4 506.2 323 510.6 323.9 515 324.3 519.5 323.9 523.9 322.8 528.3 321 532.7 318.5 537.1 315.2 541.5 311.1 545.9 306.4 550.3 300.9 554.7 294.9 559.2 288.2 563.6 281.1 568 273.5 572.4 265.5 576.8 257.4 581.2 249 585.6 240.6 590 232.2 594.4 223.9 598.9 215.8 603.3 208 607.7 200.6 612.1 193.7 616.5 187.4 620.9 181.6 625.3 176.5 629.7 172.1 634.1 168.4 638.6 165.5 430 290.9M482.9 305.9 487.3 309.4 491.7 312.8 496.2 316 500.6 319 505 321.6 509.4 323.8 513.8 325.4 518.2 326.5 522.6 326.9 527 326.6 531.4 325.6 535.9 323.8 540.3 321.2 544.7 317.9 549.1 313.8 553.5 309 557.9 303.5 562.3 297.3 566.7 290.6 571.1 283.3 575.6 275.6 580 267.5 584.4 259.1 588.8 250.6 593.2 242 597.6 233.4 602 225 606.4 216.8 610.8 208.9 615.3 201.4 619.7 194.3 624.1 187.9 628.5 182 632.9 176.8 637.3 172.4 641.7 168.7 646.1 165.7 437.6 291.2M481.7 300.3 486.1 303.7 490.5 307.4 494.9 311 499.3 314.6 503.7 317.9 508.1 321.1 512.6 323.8 517 326.1 521.4 327.8 525.8 329 530.2 329.5 534.6 329.3 539 328.3 543.4 326.5 547.8 324 552.3 320.6 556.7 316.5 561.1 311.6 565.5 306 569.9 299.7 574.3 292.9 578.7 285.5 583.1 277.6 587.5 269.4 592 260.9 596.4 252.2 600.8 243.5 605.2 234.7 609.6 226.1 614 217.8 618.4 209.7 622.8 202.1 627.2 194.9 631.7 188.4 636.1 182.4 640.5 177.2 644.9 172.7 649.3 168.9 653.7 166 445.1 291.5M484.8 298 489.3 301.4 493.7 305.1 498.1 308.8 502.5 312.6 506.9 316.3 511.3 319.9 515.7 323.1 520.1 326 524.5 328.4 529 330.3 533.4 331.5 537.8 332.1 542.2 331.9 546.6 330.9 551 329.2 555.4 326.6 559.8 323.3 564.2 319.1 568.7 314.2 573.1 308.5 577.5 302.1 581.9 295.2 586.3 287.6 590.7 279.7 595.1 271.3 599.5 262.7 603.9 253.8 608.4 244.9 612.8 236 617.2 227.3 621.6 218.8 626 210.6 630.4 202.8 634.8 195.6 639.2 188.9 643.6 182.9 648.1 177.6 652.5 173 656.9 169.3 661.3 166.3 452.7 291.8M483.6 293.1 488 295.8 492.4 299 496.8 302.6 501.2 306.4 505.7 310.3 510.1 314.2 514.5 318.1 518.9 321.7 523.3 325.1 527.7 328.1 532.1 330.7 536.5 332.6 540.9 334 545.4 334.6 549.8 334.5 554.2 333.6 558.6 331.9 563 329.3 567.4 325.9 571.8 321.7 576.2 316.7 580.6 311 585.1 304.5 589.5 297.4 593.9 289.8 598.3 281.7 602.7 273.2 607.1 264.4 611.5 255.4 615.9 246.4 620.3 237.4 624.8 228.5 629.2 219.8 633.6 211.5 638 203.6 642.4 196.2 646.8 189.5 651.2 183.4 655.6 178 660 173.4 664.5 169.6 668.9 166.6 460.3 292.2M482.4 289.7 486.8 291.5 491.2 293.8 495.6 296.7 500 300.1 504.4 303.7 508.8 307.7 513.2 311.7 517.6 315.8 522.1 319.8 526.5 323.6 530.9 327.2 535.3 330.3 539.7 332.9 544.1 335 548.5 336.4 552.9 337.1 557.3 337.1 561.8 336.2 566.2 334.5 570.6 331.9 575 328.5 579.4 324.3 583.8 319.2 588.2 313.4 592.6 306.9 597 299.7 601.5 292 605.9 283.7 610.3 275.1 614.7 266.2 619.1 257 623.5 247.8 627.9 238.7 632.3 229.6 636.7 220.8 641.2 212.4 645.6 204.4 650 196.9 654.4 190 658.8 183.9 663.2 178.4 667.6 173.8 672 170 676.4 167 467.9 292.6M485.5 289.2 489.9 290.3 494.3 292.2 498.8 294.6 503.2 297.6 507.6 301.1 512 304.9 516.4 309 520.8 313.2 525.2 317.4 529.6 321.6 534 325.5 538.5 329.2 542.9 332.4 547.3 335.2 551.7 337.3 556.1 338.8 560.5 339.6 564.9 339.6 569.3 338.8 573.7 337.1 578.2 334.5 582.6 331.1 587 326.8 591.4 321.7 595.8 315.8 600.2 309.2 604.6 301.9 609 294.1 613.4 285.7 617.9 277 622.3 267.9 626.7 258.6 631.1 249.3 635.5 240 639.9 230.8 644.3 221.9 648.7 213.3 653.1 205.2 657.6 197.6 662 190.6 666.4 184.4 670.8 178.9 675.2 174.2 679.6 170.3 684 167.3 475.5 293M484.3 289.6 488.7 289.3 493.1 289.7 497.5 290.9 501.9 292.9 506.3 295.4 510.7 298.6 515.2 302.2 519.6 306.1 524 310.3 528.4 314.6 532.8 319 537.2 323.3 541.6 327.4 546 331.2 550.4 334.5 554.9 337.4 559.3 339.7 563.7 341.3 568.1 342.1 572.5 342.1 576.9 341.3 581.3 339.7 585.7 337.1 590.1 333.7 594.6 329.4 599 324.2 603.4 318.3 607.8 311.6 612.2 304.2 616.6 296.2 621 287.7 625.4 278.8 629.8 269.6 634.3 260.2 638.7 250.8 643.1 241.3 647.5 232 651.9 222.9 656.3 214.2 660.7 206 665.1 198.3 669.5 191.3 674 184.9 678.4 179.4 682.8 174.6 687.2 170.8 691.6 167.8 483 293.4 487.4 291.3 491.9 290.1 496.3 289.8 500.7 290.3 505.1 291.6 509.5 293.6 513.9 296.3 518.3 299.5 522.7 303.2 527.1 307.3 531.6 311.6 536 316.1 540.4 320.6 544.8 325 549.2 329.3 553.6 333.2 558 336.6 562.4 339.6 566.8 342 571.3 343.6 575.7 344.6 580.1 344.7 584.5 343.9 588.9 342.2 593.3 339.7 597.7 336.2 602.1 331.9 606.5 326.7 611 320.6 615.4 313.9 619.8 306.4 624.2 298.3 628.6 289.7 633 280.7 637.4 271.4 641.8 261.8 646.2 252.2 650.7 242.6 655.1 233.2 659.5 224 663.9 215.2 668.3 206.8 672.7 199 677.1 191.9 681.5 185.5 685.9 179.9 690.4 175.1 694.8 171.2 699.2 168.2 490.6 293.8 495 291.7 499.4 290.6 503.8 290.3 508.3 290.9 512.7 292.2 517.1 294.3 521.5 297.1 525.9 300.5 530.3 304.3 534.7 308.5 539.1 313 543.5 317.6 548 322.2 552.4 326.8 556.8 331.1 561.2 335.1 565.6 338.7 570 341.8 574.4 344.3 578.8 346 583.2 347 587.7 347.1 592.1 346.4 596.5 344.8 600.9 342.2 605.3 338.7 609.7 334.4 614.1 329.1 618.5 323 622.9 316.2 627.4 308.6 631.8 300.4 636.2 291.7 640.6 282.6 645 273.1 649.4 263.4 653.8 253.7 658.2 244 662.6 234.4 667.1 225.1 671.5 216.1 675.9 207.7 680.3 199.8 684.7 192.6 689.1 186.1 693.5 180.4 697.9 175.6 702.3 171.6 706.8 168.6 498.2 294.3 502.6 292.2 507 291.1 511.4 290.8 515.8 291.4 520.2 292.9 524.7 295.1 529.1 298 533.5 301.4 537.9 305.4 542.3 309.7 546.7 314.3 551.1 319 555.5 323.8 559.9 328.5 564.4 333 568.8 337.1 573.2 340.8 577.6 344 582 346.5 586.4 348.4 590.8 349.4 595.2 349.6 599.6 348.9 604.1 347.3 608.5 344.7 612.9 341.3 617.3 336.8 621.7 331.5 626.1 325.4 630.5 318.4 634.9 310.8 639.3 302.5 643.8 293.7 648.2 284.4 652.6 274.8 657 265 661.4 255.1 665.8 245.3 670.2 235.6 674.6 226.1 679 217.1 683.5 208.5 687.9 200.5 692.3 193.2 696.7 186.7 701.1 180.9 705.5 176.1 709.9 172.1 714.3 169.1 505.8 294.8 510.2 292.7 514.6 291.6 519 291.4 523.4 292.1 527.8 293.6 532.2 295.9 536.6 298.8 541.1 302.4 545.5 306.4 549.9 310.9 554.3 315.6 558.7 320.5 563.1 325.4 567.5 330.2 571.9 334.8 576.3 339.1 580.8 342.9 585.2 346.2 589.6 348.8 594 350.7 598.4 351.8 602.8 352.1 607.2 351.4 611.6 349.8 616 347.2 620.5 343.7 624.9 339.3 629.3 333.9 633.7 327.7 638.1 320.7 642.5 313 646.9 304.6 651.3 295.6 655.7 286.2 660.2 276.5 664.6 266.6 669 256.6 673.4 246.6 677.8 236.8 682.2 227.2 686.6 218.1 691 209.4 695.4 201.3 699.9 193.9 704.3 187.3 708.7 181.5 713.1 176.6 717.5 172.6 721.9 169.6 513.3 295.3 517.8 293.2 522.2 292.1 526.6 291.9 531 292.7 535.4 294.3 539.8 296.6 544.2 299.7 548.6 303.4 553 307.5 557.5 312.1 561.9 317 566.3 322 570.7 327 575.1 331.9 579.5 336.6 583.9 341 588.3 345 592.7 348.3 597.2 351.1 601.6 353 606 354.2 610.4 354.5 614.8 353.9 619.2 352.3 623.6 349.7 628 346.2 632.4 341.7 636.9 336.3 641.3 330 645.7 323 650.1 315.1 654.5 306.6 658.9 297.6 663.3 288.1 667.7 278.3 672.1 268.2 676.6 258.1 681 247.9 685.4 238 689.8 228.3 694.2 219 698.6 210.3 703 202.1 707.4 194.6 711.8 187.9 716.3 182.1 720.7 177.1 725.1 173.1 729.5 170.1 520.9 295.8 525.3 293.7 529.7 292.7 534.2 292.5 538.6 293.3 543 295 547.4 297.4 551.8 300.6 556.2 304.4 560.6 308.6 565 313.3 569.4 318.3 573.9 323.4 578.3 328.6 582.7 333.6 587.1 338.5 591.5 343 595.9 347 600.3 350.5 604.7 353.3 609.1 355.4 613.6 356.6 618 356.9 622.4 356.3 626.8 354.8 631.2 352.2 635.6 348.7 640 344.2 644.4 338.7 648.8 332.4 653.3 325.2 657.7 317.3 662.1 308.7 666.5 299.5 670.9 289.9 675.3 280 679.7 269.8 684.1 259.5 688.5 249.3 693 239.2 697.4 229.4 701.8 220 706.2 211.1 710.6 202.9 715 195.3 719.4 188.5 723.8 182.6 728.2 177.7 732.7 173.6 737.1 170.6 528.5 296.3 532.9 294.3 537.3 293.2 541.7 293.1 546.1 294 550.6 295.7 555 298.2 559.4 301.5 563.8 305.3 568.2 309.7 572.6 314.5 577 319.6 581.4 324.9 585.8 330.2 590.3 335.3 594.7 340.3 599.1 344.9 603.5 349.1 607.9 352.6 612.3 355.5 616.7 357.7 621.1 359 625.5 359.3 630 358.8 634.4 357.2 638.8 354.7 643.2 351.1 647.6 346.6 652 341.1 656.4 334.7 660.8 327.4 665.2 319.4 669.7 310.7 674.1 301.5 678.5 291.7 682.9 281.7 687.3 271.4 691.7 261 696.1 250.6 700.5 240.4 704.9 230.5 709.4 221 713.8 212 718.2 203.7 722.6 196 727 189.2 731.4 183.2 735.8 178.2 740.2 174.2 744.6 171.1 536.1 296.9 540.5 294.8 544.9 293.8 549.3 293.7 553.7 294.6 558.1 296.4 562.5 299 567 302.4 571.4 306.3 575.8 310.9 580.2 315.8 584.6 321 589 326.3 593.4 331.7 597.8 337 602.2 342.1 606.7 346.8 611.1 351.1 615.5 354.8 619.9 357.7 624.3 360 628.7 361.3 633.1 361.7 637.5 361.2 641.9 359.7 646.4 357.1 650.8 353.5 655.2 349 659.6 343.4 664 337 668.4 329.6 672.8 321.5 677.2 312.8 681.6 303.4 686.1 293.6 690.5 283.4 694.9 273 699.3 262.4 703.7 252 708.1 241.7 712.5 231.6 716.9 222 721.3 212.9 725.8 204.5 730.2 196.8 734.6 189.9 739 183.9 743.4 178.8 747.8 174.7 752.2 171.6 543.7 297.4 548.1 295.4 552.5 294.4 556.9 294.4 561.3 295.3 565.7 297.2 570.1 299.9 574.5 303.3 579 307.4 583.4 312 587.8 317 592.2 322.3 596.6 327.8 601 333.3 605.4 338.7 609.8 343.9 614.2 348.8 618.6 353.1 623.1 356.9 627.5 360 631.9 362.2 636.3 363.6 640.7 364.1 645.1 363.6 649.5 362.1 653.9 359.5 658.3 355.9 662.8 351.3 667.2 345.7 671.6 339.2 676 331.8 680.4 323.7 684.8 314.8 689.2 305.3 693.6 295.4 698 285.1 702.5 274.5 706.9 263.9 711.3 253.3 715.7 242.9 720.1 232.7 724.5 223 728.9 213.8 733.3 205.3 737.7 197.5 742.2 190.5 746.6 184.5 751 179.4 755.4 175.3 759.8 172.2 551.2 298 555.7 296 560.1 295 564.5 295 568.9 296 573.3 297.9 577.7 300.7 582.1 304.2 586.5 308.4 590.9 313.1 595.4 318.2 599.8 323.7 604.2 329.3 608.6 334.9 613 340.4 617.4 345.7 621.8 350.7 626.2 355.1 630.6 359 635.1 362.1 639.5 364.5 643.9 366 648.3 366.5 652.7 366 657.1 364.5 661.5 361.9 665.9 358.3 670.3 353.7 674.7 348.1 679.2 341.5 683.6 334 688 325.8 692.4 316.8 696.8 307.2 701.2 297.2 705.6 286.8 710 276.1 714.4 265.4 718.9 254.7 723.3 244.1 727.7 233.9 732.1 224 736.5 214.8 740.9 206.1 745.3 198.3 749.7 191.2 754.1 185.1 758.6 180 763 175.9 767.4 172.8 558.8 298.6 563.2 296.6 567.6 295.6 572.1 295.7 576.5 296.7 580.9 298.7 585.3 301.5 589.7 305.1 594.1 309.4 598.5 314.2 602.9 319.5 607.3 325 611.8 330.7 616.2 336.5 620.6 342.1 625 347.6 629.4 352.6 633.8 357.2 638.2 361.1 642.6 364.3 647 366.7 651.5 368.3 655.9 368.8 660.3 368.4 664.7 366.9 669.1 364.3 673.5 360.7 677.9 356.1 682.3 350.4 686.7 343.7 691.2 336.2 695.6 327.9 700 318.8 704.4 309.2 708.8 299 713.2 288.5 717.6 277.7 722 266.8 726.4 256 730.8 245.3 735.3 235 739.7 225.1 744.1 215.7 748.5 207 752.9 199 757.3 191.9 761.7 185.8 766.1 180.6 770.5 176.5 775 173.4 566.4 299.2 570.8 297.2 575.2 296.2 579.6 296.3 584 297.4 588.5 299.5 592.9 302.4 597.3 306.1 601.7 310.4 606.1 315.3 610.5 320.7 614.9 326.4 619.3 332.2 623.7 338.1 628.2 343.8 632.6 349.4 637 354.5 641.4 359.2 645.8 363.2 650.2 366.5 654.6 369 659 370.6 663.4 371.2 667.9 370.8 672.3 369.3 676.7 366.7 681.1 363.1 685.5 358.4 689.9 352.7 694.3 346 698.7 338.4 703.1 330 707.6 320.8 712 311.1 716.4 300.8 720.8 290.2 725.2 279.3 729.6 268.3 734 257.4 738.4 246.6 742.8 236.1 747.2 226.1 751.7 216.6 756.1 207.8 760.5 199.8 764.9 192.7 769.3 186.4 773.7 181.2 778.1 177.1 782.5 174 574 299.8 578.4 297.8 582.8 296.9 587.2 297 591.6 298.2 596 300.3 600.4 303.2 604.9 307 609.3 311.5 613.7 316.5 618.1 321.9 622.5 327.7 626.9 333.7 631.3 339.6 635.7 345.5 640.1 351.2 644.6 356.4 649 361.2 653.4 365.3 657.8 368.7 662.2 371.2 666.6 372.9 671 373.5 675.4 373.1 679.8 371.7 684.3 369.1 688.7 365.5 693.1 360.7 697.5 355 701.9 348.2 706.3 340.6 710.7 332.1 715.1 322.8 719.5 313 724 302.6 728.4 291.9 732.8 280.9 737.2 269.8 741.6 258.7 746 247.8 750.4 237.3 754.8 227.1 759.2 217.6 763.7 208.7 768.1 200.6 772.5 193.4 776.9 187.1 781.3 181.9 785.7 177.7 790.1 174.6 581.6 300.4 586 298.4 590.4 297.5 594.8 297.7 599.2 298.9 603.6 301.1 608 304.1 612.4 308 616.8 312.5 621.3 317.6 625.7 323.2 630.1 329.1 634.5 335.1 638.9 341.2 643.3 347.2 647.7 353 652.1 358.3 656.5 363.2 661 367.4 665.4 370.8 669.8 373.4 674.2 375.1 678.6 375.8 683 375.5 687.4 374 691.8 371.5 696.2 367.8 700.7 363.1 705.1 357.3 709.5 350.4 713.9 342.7 718.3 334.1 722.7 324.8 727.1 314.9 731.5 304.4 735.9 293.5 740.4 282.4 744.8 271.2 749.2 260.1 753.6 249.1 758 238.4 762.4 228.2 766.8 218.5 771.2 209.6 775.6 201.4 780.1 194.1 784.5 187.8 788.9 182.5 793.3 178.3 797.7 175.2 589.1 301.1 593.5 299.1 598 298.2 602.4 298.4 606.8 299.6 611.2 301.9 615.6 305 620 308.9 624.4 313.6 628.8 318.8 633.2 324.4 637.7 330.4 642.1 336.6 646.5 342.8 650.9 348.9 655.3 354.7 659.7 360.2 664.1 365.1 668.5 369.4 672.9 373 677.4 375.7 681.8 377.4 686.2 378.1 690.6 377.8 695 376.4 699.4 373.8 703.8 370.1 708.2 365.4 712.6 359.5 717.1 352.7 721.5 344.9 725.9 336.2 730.3 326.8 734.7 316.8 739.1 306.2 743.5 295.2 747.9 284 752.3 272.7 756.8 261.4 761.2 250.3 765.6 239.5 770 229.2 774.4 219.5 778.8 210.4 783.2 202.2 787.6 194.9 792 188.5 796.5 183.2 800.9 179 805.3 175.8 596.7 301.7 601.1 299.7 605.5 298.9 609.9 299.1 614.4 300.4 618.8 302.7 623.2 305.9 627.6 309.9 632 314.6 636.4 319.9 640.8 325.7 645.2 331.8 649.6 338.1 654.1 344.4 658.5 350.6 662.9 356.5 667.3 362.1 671.7 367.1 676.1 371.5 680.5 375.1 684.9 377.9 689.3 379.7 693.8 380.4 698.2 380.1 702.6 378.7 707 376.2 711.4 372.5 715.8 367.7 720.2 361.8 724.6 354.9 729 347 733.5 338.3 737.9 328.8 742.3 318.6 746.7 308 751.1 296.9 755.5 285.6 759.9 274.2 764.3 262.8 768.7 251.6 773.2 240.7 777.6 230.3 782 220.4 786.4 211.3 790.8 203 795.2 195.6 799.6 189.2 804 183.9 808.4 179.6 812.9 176.5 604.3 302.4 608.7 300.4 613.1 299.5 617.5 299.8 621.9 301.2 626.3 303.5 630.8 306.8 635.2 310.9 639.6 315.7 644 321.1 648.4 326.9 652.8 333.1 657.2 339.5 661.6 345.9 666 352.3 670.5 358.3 674.9 364 679.3 369.1 683.7 373.6 688.1 377.3 692.5 380.1 696.9 381.9 701.3 382.7 705.7 382.5 710.2 381 714.6 378.5 719 374.8 723.4 370 727.8 364 732.2 357.1 736.6 349.1 741 340.3 745.4 330.8 749.9 320.5 754.3 309.8 758.7 298.6 763.1 287.2 767.5 275.6 771.9 264.1 776.3 252.8 780.7 241.8 785.1 231.3 789.6 221.4 794 212.2 798.4 203.8 802.8 196.4 807.2 189.9 811.6 184.5 816 180.3 820.4 177.1 611.9 303 616.3 301 620.7 300.2 625.1 300.5 629.5 301.9 633.9 304.3 638.3 307.7 642.7 311.8 647.2 316.7 651.6 322.2 656 328.2 660.4 334.5 664.8 341 669.2 347.5 673.6 353.9 678 360.1 682.4 365.8 686.9 371.1 691.3 375.6 695.7 379.4 700.1 382.3 704.5 384.2 708.9 385 713.3 384.8 717.7 383.4 722.1 380.8 726.6 377.1 731 372.2 735.4 366.3 739.8 359.3 744.2 351.3 748.6 342.4 753 332.7 757.4 322.4 761.8 311.5 766.3 300.3 770.7 288.7 775.1 277.1 779.5 265.5 783.9 254.1 788.3 243 792.7 232.4 797.1 222.4 801.5 213.1 806 204.7 810.4 197.1 814.8 190.6 819.2 185.2 823.6 180.9 828 177.8 619.4 303.7 623.9 301.7 628.3 300.9 632.7 301.3 637.1 302.7 641.5 305.2 645.9 308.6 650.3 312.8 654.7 317.8 659.1 323.4 663.6 329.5 668 335.9 672.4 342.5 676.8 349.1 681.2 355.6 685.6 361.9 690 367.7 694.4 373 698.8 377.7 703.3 381.5 707.7 384.4 712.1 386.4 716.5 387.3 720.9 387.1 725.3 385.7 729.7 383.1 734.1 379.4 738.5 374.5 743 368.5 747.4 361.4 751.8 353.4 756.2 344.4 760.6 334.7 765 324.3 769.4 313.3 773.8 301.9 778.2 290.3 782.7 278.6 787.1 266.9 791.5 255.4 795.9 244.2 800.3 233.5 804.7 223.4 809.1 214 813.5 205.5 817.9 197.9 822.4 191.4 826.8 185.9 831.2 181.6 835.6 178.5 627 304.4 631.4 302.4 635.8 301.6 640.3 302 644.7 303.5 649.1 306 653.5 309.5 657.9 313.8 662.3 318.9 666.7 324.6 671.1 330.7 675.5 337.2 680 343.9 684.4 350.7 688.8 357.3 693.2 363.6 697.6 369.6 702 375 706.4 379.7 710.8 383.6 715.2 386.6 719.7 388.6 724.1 389.5 728.5 389.4 732.9 388 737.3 385.4 741.7 381.7 746.1 376.8 750.5 370.7 754.9 363.6 759.4 355.5 763.8 346.5 768.2 336.6 772.6 326.1 777 315.1 781.4 303.6 785.8 291.9 790.2 280 794.6 268.2 799.1 256.6 803.5 245.3 807.9 234.5 812.3 224.4 816.7 214.9 821.1 206.3 825.5 198.7 829.9 192.1 834.3 186.6 838.8 182.3 843.2 179.2 634.6 305.1 639 303.1 643.4 302.4 647.8 302.8 652.2 304.3 656.7 306.9 661.1 310.4 665.5 314.8 669.9 320 674.3 325.7 678.7 332 683.1 338.6 687.5 345.4 691.9 352.2 696.4 359 700.8 365.4 705.2 371.5 709.6 376.9 714 381.7 718.4 385.7 722.8 388.8 727.2 390.8 731.6 391.8 736.1 391.6 740.5 390.3 744.9 387.7 749.3 384 753.7 379 758.1 372.9 762.5 365.8 766.9 357.6 771.3 348.5 775.8 338.6 780.2 328 784.6 316.9 789 305.3 793.4 293.5 797.8 281.5 802.2 269.6 806.6 257.9 811 246.5 815.5 235.6 819.9 225.4 824.3 215.8 828.7 207.2 833.1 199.5 837.5 192.9 841.9 187.4 846.3 183 850.7 179.8 642.2 305.8 646.6 303.8 651 303.1 655.4 303.5 659.8 305.1 664.2 307.7 668.6 311.3 673.1 315.8 677.5 321 681.9 326.9 686.3 333.3 690.7 340 695.1 346.9 699.5 353.8 703.9 360.6 708.3 367.2 712.8 373.3 717.2 378.9 721.6 383.8 726 387.8 730.4 390.9 734.8 393 739.2 394.1 743.6 393.9 748 392.6 752.5 390 756.9 386.2 761.3 381.3 765.7 375.2 770.1 367.9 774.5 359.7 778.9 350.5 783.3 340.5 787.7 329.9 792.2 318.6 796.6 307 801 295 805.4 283 809.8 271 814.2 259.1 818.6 247.7 823 236.7 827.4 226.4 831.9 216.8 836.3 208 840.7 200.3 845.1 193.6 849.5 188.1 853.9 183.7 858.3 180.5 649.8 306.5 654.2 304.5 658.6 303.8 663 304.3 667.4 305.9 671.8 308.6 676.2 312.3 680.6 316.8 685 322.1 689.5 328.1 693.9 334.5 698.3 341.3 702.7 348.3 707.1 355.4 711.5 362.3 715.9 368.9 720.3 375.2 724.7 380.8 729.2 385.8 733.6 389.9 738 393.1 742.4 395.2 746.8 396.3 751.2 396.2 755.6 394.8 760 392.3 764.4 388.5 768.9 383.5 773.3 377.4 777.7 370.1 782.1 361.8 786.5 352.6 790.9 342.5 795.3 331.7 799.7 320.4 804.1 308.6 808.6 296.6 813 284.4 817.4 272.3 821.8 260.4 826.2 248.9 830.6 237.8 835 227.4 839.4 217.7 843.8 208.9 848.3 201.1 852.7 194.4 857.1 188.8 861.5 184.4 865.9 181.3 657.3 307.2 661.7 305.3 666.2 304.6 670.6 305.1 675 306.7 679.4 309.5 683.8 313.2 688.2 317.8 692.6 323.2 697 329.3 701.4 335.8 705.9 342.7 710.3 349.8 714.7 356.9 719.1 364 723.5 370.7 727.9 377 732.3 382.8 736.7 387.8 741.1 392 745.6 395.2 750 397.4 754.4 398.5 758.8 398.4 763.2 397.1 767.6 394.6 772 390.8 776.4 385.7 780.8 379.5 785.3 372.2 789.7 363.9 794.1 354.6 798.5 344.4 802.9 333.6 807.3 322.2 811.7 310.3 816.1 298.2 820.5 285.9 825 273.7 829.4 261.7 833.8 250 838.2 238.9 842.6 228.4 847 218.6 851.4 209.8 855.8 201.9 860.2 195.2 864.7 189.6 869.1 185.2 873.5 182" stroke="#ff00ff" fill="none" stroke-width="1" stroke-dasharray="1.6 1.7" marker-start="url(#mm)" marker-mid="url(#mm)" marker-end="url(#mm)"/>
  <!-- front border -->
  <path d="M288.2 493.8L701.9 575.4L942.4 437.3" stroke="#000" stroke-width="2.7" fill="none"/>
  <path d="M288.2 493.8l5.6 -3.2M701.9 575.4l-6.4 -1.3M347.3 505.4l5.6 -3.2M736.3 555.6l-6.4 -1.3M406.4 517.1l5.6 -3.2M770.7 535.9l-6.4 -1.3M465.5 528.8l5.6 -3.2M805.1 516.2l-6.4 -1.3M524.6 540.4l5.6 -3.2M839.5 496.4l-6.4 -1.3M583.7 552l5.6 -3.2M873.9 476.7l-6.4 -1.3M642.8 563.7l5.6 -3.2M908.3 457l-6.4 -1.3M701.9 575.4l5.6 -3.2M942.7 437.2l-6.4 -1.3" stroke="#000" stroke-width="2" fill="none"/>
  <!-- legend samples -->
  <path d="M974 82h60M999 78v9" stroke="#ff0000" stroke-width="1" fill="none"/>
  <path d="M974 100h60" stroke="#00ff00" stroke-width="1" stroke-dasharray="5.5 2" fill="none"/><path d="M995 96l8 8M1003 96l-8 8" stroke="#00ff00" fill="none"/>
  <path d="M974 117h60" stroke="#0000ff" stroke-width="1" stroke-dasharray="3.2 3" fill="none"/><path d="M994 117h10M999 113v9M995.5 113.5l7 7M1002.5 113.5l-7 7" stroke="#0000ff" fill="none"/>
  <path d="M974 135h60" stroke="#ff00ff" stroke-width="1" stroke-dasharray="1.6 1.7" fill="none"/><path d="M995 131h8v8h-8z" stroke="#ff00ff" fill="none"/>
  </g>
  <g font-family="Liberation Sans" font-size="17.5" fill="#000">
    <g text-anchor="end">
      <text x="963" y="87.5">2 sin(10x) cos(y)</text>
      <text x="963" y="105">cos(x) sin(y)</text>
      <text x="963" y="122.5">atan(x) cos(y)</text>
      <text x="963" y="140">sqrt(x) cos(y)</text>
    </g>
    <g text-anchor="middle">
<text x="281.9" y="507.6">0</text>
<text x="713.2" y="584.4">0</text>
<text x="341" y="519.2">1</text>
<text x="747.6" y="564.6">1</text>
<text x="400.1" y="530.9">2</text>
<text x="782" y="544.9">2</text>
<text x="459.2" y="542.5">3</text>
<text x="816.4" y="525.2">3</text>
<text x="518.3" y="554.2">4</text>
<text x="850.8" y="505.4">4</text>
<text x="577.4" y="565.8">5</text>
<text x="885.2" y="485.7">5</text>
<text x="636.5" y="577.5">6</text>
<text x="919.6" y="466">6</text>
<text x="695.6" y="589.1">7</text>
<text x="954" y="446.2">7</text>
    </g>
  </g>
</svg>

<!-- ================= DESKTOP STRIP ================= -->
<div class="abs" style="left:0;top:695px;width:1024px;height:43px;background:#000;overflow:hidden;">
  <svg class="abs" style="left:0;top:0" width="1024" height="43">
    <defs><radialGradient id="blob"><stop offset="0" stop-color="#2a2a2a"/><stop offset="1" stop-color="#000"/></radialGradient></defs>
    <ellipse cx="610" cy="2" rx="75" ry="24" fill="url(#blob)"/>
    <ellipse cx="490" cy="14" rx="50" ry="18" fill="url(#blob)" opacity="0.5"/>
    <text x="447" y="15.500" font-family="Liberation Mono" font-weight="bold" font-size="11.7" fill="#ee1111">nos Aires</text>
    <text x="447" y="34.500" font-family="Liberation Mono" font-weight="bold" font-size="11.7" fill="#a00c0c" opacity="0.75">/Sta..</text>
    <rect x="447" y="30" width="40" height="3" fill="#000" opacity="0.55"/>
    <path d="M485.700 0Q488 22 494.500 32.500" stroke="#aaa" stroke-width="1.1" fill="none"/>
    <path d="M490 24L494.500 32.500" stroke="#fff" stroke-width="1.3" fill="none"/>
    <path d="M567.700 1Q564 24 552 31" stroke="#bbb" stroke-width="1.1" fill="none"/>
    <path d="M511.500 12Q580 9 634.500 1" stroke="#c4c4c4" stroke-width="1.2" stroke-dasharray="1.2 2.800" fill="none"/>
    <path d="M475 31.500L552.500 31Q610 24 651 4.500" stroke="#c4c4c4" stroke-width="1.2" stroke-dasharray="1.2 2.800" fill="none"/>
    <circle cx="494.500" cy="32.500" r="1.300" fill="#d02020"/>
  </svg>
  <div class="abs" style="left:784px;top:-3px;width:203px;height:14.500px;background:#b6b6be;border:1px solid #4c4c54;border-bottom:2px solid #5a5a62;border-radius:3px;box-sizing:border-box;"></div>
  <svg class="abs" style="left:784px;top:0" width="203" height="12">
    <path d="M41.500 0v9.500M82 0v9.500M121.500 0v9.500M160.500 0v9.500" stroke="#8c8c94" stroke-width="1"/>
    <path d="M42.500 0v9.500M83 0v9.500M122.500 0v9.500M161.500 0v9.500" stroke="#d6d6de" stroke-width="1"/>
    <g font-family="Liberation Sans" font-size="9.600" fill="#000">
      <text x="7.300" y="8.200" textLength="31.500" lengthAdjust="spacingAndGlyphs">Lo:32</text>
      <text x="47" y="8.200" textLength="31.500" lengthAdjust="spacingAndGlyphs">37/52</text>
      <text x="86.500" y="8.200" textLength="31.500" lengthAdjust="spacingAndGlyphs">30/45</text>
      <text x="125.500" y="8.200" textLength="31.500" lengthAdjust="spacingAndGlyphs">19/36</text>
      <text x="164.500" y="8.200" textLength="31.500" lengthAdjust="spacingAndGlyphs">30/36</text>
    </g>
  </svg>
  <div class="abs" style="left:1010px;top:27px;width:20px;height:20px;background:repeating-linear-gradient(90deg,#eeeee6 0,#eeeee6 3px,#dcdcd4 3px,#dcdcd4 4px);border-left:1px solid #fff;border-top:1px solid #fff;outline:1px solid #8a8a82;"></div>
</div>

<!-- ================= KONSOLE WINDOW ================= -->
<div class="abs" id="konsole" style="left:0;top:0;width:498px;height:459px;background:#eeeee6;overflow:hidden;">
  <div class="tbar" style="width:498px;"></div>
  <svg class="abs" style="left:76px;top:1px" width="16" height="14"><rect x="0.5" y="0.5" width="14" height="12.5" rx="1.5" fill="#d6d6de" stroke="#8a8a92"/><rect x="2" y="2" width="11" height="9" fill="#141416"/><path d="M3 3.5h3" stroke="#aaa" stroke-width="1"/></svg>
  <div class="ttxt" style="left:95.5px;top:0;letter-spacing:0.08px;">chhabra@nanak:</div><div class="ttxt" style="left:201.5px;top:0;">-</div><div class="ttxt" style="left:212px;top:0;letter-spacing:-0.3px;">Shell</div><div class="ttxt" style="left:243.500px;top:0;">-</div><div class="ttxt" style="left:253px;top:0;">Konsole</div><div class="ttxt" style="left:304.500px;top:0;font-weight:normal;">&lt;2&gt;</div>
  <div class="btn" style="left:442px;top:0px;"></div>
  <div class="btn" style="left:461px;top:0px;"></div>
  <div class="btn" style="left:480px;top:0px;"></div>
  <!-- menubar -->
  <div class="abs stripes" style="left:0;top:17px;width:498px;height:24px;"></div>
  <div class="abs" style="left:3px;top:19px;font-size:12px;line-height:16px;color:#000;white-space:pre;word-spacing:0px;"><span class="mi" style="left:0">View</span><span class="mi" style="left:34.5px">Bookmarks</span><span class="mi" style="left:102px">Settings</span><span class="mi" style="left:154px">Help</span></div>
  <!-- terminal frame -->
  <div class="abs" style="left:0;top:41px;width:494px;height:1px;background:#000;"></div>
  <div id="term"><div>0230904.534nanak/xy.dat" u 1:5 t "sqrt(x)" w linespoints</div><div> </div><div>er to continue ...</div><div> </div><div>gnuplot_setstyle</div><div>gnuplot_plotslope</div><div>00000E+00*x +  1.00000E-01 t "Slope" w lines</div><div> </div><div>er to continue ...</div><div> </div><div>gnuplot_plotequation2d</div><div>+x**2.0-(x**3.0)*sin(7*x) t "Equation" w lines</div><div> </div><div>gnuplot_resetsession</div><div>gnuplot_reset</div><div> </div><div> </div><div>1024 "Created using GNUPLOT-FORTRAN95 interface (Madhusudan</div><div>) 2004 : by chhabra@nanak" at graph 0.1,1.01,-1.0 rotate fo</div><div>ica,7"</div></div>
  <!-- scrollbar -->
  <div class="abs" style="left:479px;top:42px;width:15px;height:380px;background:linear-gradient(90deg,#a8a8a8 0,#c4c4c4 1.5px,#dedede 4px,#ededed 8px,#e6e6e6 11px,#d2d2d2 13.5px,#bcbcbc 15px);"></div>
  <div class="abs" style="left:479px;top:42px;width:15px;height:16px;background:linear-gradient(90deg,#d8d8d8,#f2f2f2 50%,#dedede);"></div>
  <div class="abs" style="left:479px;top:391px;width:15px;height:31px;background:linear-gradient(90deg,#d8d8d8,#f2f2f2 50%,#dedede);"></div>
  <svg class="abs" style="left:479px;top:42px" width="15" height="380">
    <defs><linearGradient id="thg" x1="0" x2="1" y1="0" y2="0"><stop offset="0" stop-color="#b4b4b4"/><stop offset="0.3" stop-color="#fdfdfd"/><stop offset="0.65" stop-color="#f0f0f0"/><stop offset="1" stop-color="#a8a8a8"/></linearGradient>
    <linearGradient id="thv" x1="0" x2="0" y1="0" y2="1"><stop offset="0" stop-color="#888" stop-opacity="0.7"/><stop offset="0.14" stop-color="#fff" stop-opacity="0"/><stop offset="0.86" stop-color="#fff" stop-opacity="0"/><stop offset="1" stop-color="#888" stop-opacity="0.7"/></linearGradient></defs>
    <path d="M7.500 5L11 11H4z" fill="#484848"/>
    <path d="M7.500 354.500L11 360.500H4z" fill="#484848"/>
    <path d="M7.500 375.500L11 369.500H4z" fill="#484848"/>
    <rect x="1.500" y="310.500" width="12" height="37.500" rx="5.500" fill="url(#thg)" stroke="#6a6a6a"/>
    <rect x="2" y="311" width="11" height="36.500" rx="5" fill="url(#thv)"/>
    <path d="M1.500 23Q1.500 16.500 7.500 16.500Q13.500 16.500 13.500 23" fill="none" stroke="#8a8a8a"/>
    <path d="M2 23Q2 18 7.500 18Q13 18 13 23" fill="none" stroke="#b8b8b8" stroke-width="1.500"/>
  </svg>
  <div class="abs" style="left:494px;top:41px;width:3px;height:391px;background:#f8f8f4;"></div>
  <div class="abs" style="left:497px;top:41px;width:1px;height:391px;background:#a2a29a;"></div>
  <!-- under terminal -->
  <div class="abs" style="left:0;top:422px;width:494px;height:1px;background:#9a9a92;"></div>
  <div class="abs" style="left:0;top:423px;width:497px;height:7px;background:#fff;"></div>
  <div class="abs" style="left:0;top:430px;width:498px;height:1px;background:#9a9a92;"></div>
  <div class="abs stripes" style="left:0;top:431px;width:498px;height:28px;"></div>
</div>

<!-- ================= GNUPLOT WINDOW ================= -->
<div class="abs" style="left:0;top:362px;width:447px;height:6px;background:#000;"></div>
<div class="abs" id="gnuplot" style="left:0;top:368px;width:447px;height:365px;background:#eeeee6;border-radius:7px 7px 0 0;overflow:hidden;">
  <div class="tbar" style="width:447px;height:17px;background:linear-gradient(#fff 0,#fff 1px,#e2e2e4 1px,#dcdcde 5px,#cfcfd1 11px,#c2c2c4 16px,#b0b0b2 17px);"></div>
  <div class="abs" style="left:4px;top:2px;width:18px;height:9px;border-radius:5px;border:1px solid #6e6e70;background:linear-gradient(#c4c4c6,#f4f4f6 50%,#fff 80%,#e0e0e2);"></div>
  <div class="btn" style="left:28px;top:1px;"></div>
  <div class="btn" style="left:390px;top:1px;"></div>
  <div class="btn" style="left:409px;top:1px;"></div>
  <div class="btn" style="left:428px;top:1px;"></div>
  <svg class="abs" style="left:184px;top:0" width="18" height="18"><path d="M2 1.5L6 1.5L16.5 16.5L12.5 16.5Z" fill="#5a5a5e"/><path d="M15 1.5L16.500 1.5L3 16.5L1.5 16.5Z" fill="#3c3c40"/></svg>
  <div class="ttxt" style="left:206px;top:1px;letter-spacing:-0.2px;">Gnuplot</div>
</div>
<svg class="abs" style="left:0;top:386px" width="447" height="347" viewBox="0 386 447 347">
  <g shape-rendering="crispEdges">
  <rect x="44" y="427" width="384" height="264" fill="none" stroke="#000" stroke-width="2"/>
  <path d="M105.1 691V687.5M105.1 427V430.500M166.2 691V687.5M166.2 427V430.500M227.3 691V687.5M227.3 427V430.500M288.5 691V687.5M288.5 427V430.500M349.6 691V687.5M349.6 427V430.500M410.7 691V687.5M410.7 427V430.500M44 664.6H47.500M428 664.6H424.500M44 611.8H47.500M428 611.8H424.500M44 559H47.500M428 559H424.500M44 506.2H47.500M428 506.2H424.500M44 453.4H47.500M428 453.4H424.500" stroke="#000" stroke-width="2" fill="none"/>
  </g>
  <g shape-rendering="crispEdges">
<path d="M44 559L59.7 508.4L75.3 530.2L91 593.2L106.7 607.3L122.4 552.2L138 506.9L153.7 536.1L169.4 598.1L185.1 604.2L200.7 545.6L216.4 506.2L232.1 542.4L247.8 602.3L263.4 600.3L279.1 539.2L294.8 506.4L310.4 548.9L326.1 605.8L341.8 595.7L357.5 533.1L373.1 507.5L388.8 555.6L404.5 608.6L420.2 590.6L428 559" stroke="#ff0000" stroke-width="1" fill="none"/>
<path d="M44.5 557v3M60.5 507v3M75.5 529v3M91.5 592v3M107.5 606v3M122.5 551v3M138.5 505v3M154.5 535v3M169.5 597v3M185.5 603v3M201.5 544v3M216.5 505v3M232.5 541v3M248.5 601v3M263.5 599v3M279.5 538v3M295.5 505v3M310.5 547v3M326.5 604v3M342.5 594v3M357.5 532v3M373.5 506v3M389.5 554v3M404.5 607v3M420.5 589v3M43 558.5h3M59 508.5h3M74 530.5h3M90 593.5h3M106 607.5h3M121 552.5h3M137 506.5h3M153 536.5h3M168 598.5h3M184 604.5h3M200 545.5h3M215 506.5h3M231 542.5h3M247 602.5h3M262 600.5h3M278 539.5h3M294 506.5h3M309 548.5h3M325 605.5h3M341 595.5h3M356 533.5h3M372 507.5h3M388 555.5h3M403 608.5h3M419 590.5h3" stroke="#ff0000" stroke-width="1" fill="none"/>
<path d="M44 532.6L59.7 532.8L75.3 533.5L91 534.5L106.7 536L122.4 537.8L138 540L153.7 542.5L169.4 545.3L185.1 548.3L200.7 551.5L216.4 554.8L232.1 558.2L247.8 561.5L263.4 564.9L279.1 568.1L294.8 571.2L310.4 574.1L326.1 576.7L341.8 579.1L357.5 581.1L373.1 582.8L388.8 584.1L404.5 584.9L420.2 585.3L428 585.3" stroke="#00ff00" stroke-width="1" fill="none"/>
<path d="M43.5 531v3M45.5 531v3M59.5 531v3M61.5 531v3M74.5 532v3M76.5 532v3M90.5 533v3M92.5 533v3M106.5 534v3M108.5 534v3M121.5 536v3M123.5 536v3M137.5 539v3M139.5 539v3M153.5 541v3M155.5 541v3M168.5 544v3M170.5 544v3M184.5 547v3M186.5 547v3M200.5 550v3M202.5 550v3M215.5 553v3M217.5 553v3M231.5 557v3M233.5 557v3M247.5 560v3M249.5 560v3M262.5 563v3M264.5 563v3M278.5 567v3M280.5 567v3M294.5 570v3M296.5 570v3M309.5 573v3M311.5 573v3M325.5 575v3M327.5 575v3M341.5 578v3M343.5 578v3M356.5 580v3M358.5 580v3M372.5 581v3M374.5 581v3M388.5 583v3M390.5 583v3M403.5 583v3M405.5 583v3M419.5 584v3M421.5 584v3" stroke="#00ff00" stroke-width="1" fill="none"/>
<path d="M44 559L59.7 555.6L75.3 552.4L91 549.3L106.7 546.5L122.4 543.9L138 541.7L153.7 539.7L169.4 537.9L185.1 536.4L200.7 535L216.4 533.8L232.1 532.7L247.8 531.8L263.4 530.9L279.1 530.2L294.8 529.5L310.4 528.9L326.1 528.3L341.8 527.8L357.5 527.3L373.1 526.9L388.8 526.5L404.5 526.2L420.2 525.8L428 525.7" stroke="#0000ff" stroke-width="1" fill="none"/>
<path d="M43 557h3v3h-3zM59 554h3v3h-3zM74 551h3v3h-3zM90 548h3v3h-3zM106 545h3v3h-3zM121 542h3v3h-3zM137 540h3v3h-3zM153 538h3v3h-3zM168 536h3v3h-3zM184 535h3v3h-3zM200 534h3v3h-3zM215 532h3v3h-3zM231 531h3v3h-3zM247 530h3v3h-3zM262 529h3v3h-3zM278 529h3v3h-3zM294 528h3v3h-3zM309 527h3v3h-3zM325 527h3v3h-3zM341 526h3v3h-3zM356 526h3v3h-3zM372 525h3v3h-3zM388 525h3v3h-3zM403 525h3v3h-3zM419 524h3v3h-3z" fill="#0000ff"/>
<path d="M44 559L59.7 549.5L75.3 545.6L91 542.6L106.7 540.1L122.4 537.9L138 535.8L153.7 534L169.4 532.3L185.1 530.6L200.7 529.1L216.4 527.6L232.1 526.3L247.8 524.9L263.4 523.6L279.1 522.4L294.8 521.2L310.4 520L326.1 518.9L341.8 517.8L357.5 516.7L373.1 515.7L388.8 514.7L404.5 513.7L420.2 512.7L428 512.2" stroke="#ff00ff" stroke-width="1" fill="none"/>
<path d="M43 557h3v3h-3zM59 548h3v3h-3zM74 544h3v3h-3zM90 541h3v3h-3zM106 539h3v3h-3zM121 536h3v3h-3zM137 534h3v3h-3zM153 532h3v3h-3zM168 531h3v3h-3zM184 529h3v3h-3zM200 528h3v3h-3zM215 526h3v3h-3zM231 525h3v3h-3zM247 523h3v3h-3zM262 522h3v3h-3zM278 521h3v3h-3zM294 520h3v3h-3zM309 519h3v3h-3zM325 517h3v3h-3zM341 516h3v3h-3zM356 515h3v3h-3zM372 514h3v3h-3zM388 513h3v3h-3zM403 512h3v3h-3zM419 511h3v3h-3z" fill="#ff00ff"/>
<path d="M44 556.4L45.9 555.9L47.9 555.5L49.8 555.1L51.7 554.7L53.6 554.3L55.6 553.9L57.5 553.4L59.4 553L61.4 552.6L63.3 552.2L65.2 551.8L67.2 551.4L69.1 550.9L71 550.5L72.9 550.1L74.9 549.7L76.8 549.3L78.7 548.9L80.7 548.4L82.6 548L84.5 547.6L86.5 547.2L88.4 546.8L90.3 546.4L92.2 545.9L94.2 545.5L96.1 545.1L98 544.7L100 544.3L101.9 543.9L103.8 543.4L105.7 543L107.7 542.6L109.6 542.2L111.5 541.8L113.5 541.4L115.4 540.9L117.3 540.5L119.3 540.1L121.2 539.7L123.1 539.3L125 538.9L127 538.4L128.9 538L130.8 537.6L132.8 537.2L134.7 536.8L136.6 536.4L138.6 535.9L140.5 535.5L142.4 535.1L144.3 534.7L146.3 534.3L148.2 533.9L150.1 533.4L152.1 533L154 532.6L155.9 532.2L157.8 531.8L159.8 531.4L161.7 530.9L163.6 530.5L165.6 530.1L167.5 529.7L169.4 529.3L171.4 528.9L173.3 528.4L175.2 528L177.1 527.6L179.1 527.2L181 526.8L182.9 526.4L184.9 525.9L186.8 525.5L188.7 525.1L190.7 524.7L192.6 524.3L194.5 523.9L196.4 523.4L198.4 523L200.3 522.6L202.2 522.2L204.2 521.8L206.1 521.4L208 520.9L209.9 520.5L211.9 520.1L213.8 519.7L215.7 519.3L217.7 518.9L219.6 518.4L221.5 518L223.5 517.6L225.4 517.2L227.3 516.8L229.2 516.3L231.2 515.9L233.1 515.5L235 515.1L237 514.7L238.9 514.3L240.8 513.8L242.8 513.4L244.7 513L246.6 512.6L248.5 512.2L250.5 511.8L252.4 511.3L254.3 510.9L256.3 510.5L258.2 510.1L260.1 509.7L262.1 509.3L264 508.8L265.9 508.4L267.8 508L269.8 507.6L271.7 507.2L273.6 506.8L275.6 506.3L277.5 505.9L279.4 505.5L281.3 505.1L283.3 504.7L285.2 504.3L287.1 503.8L289.1 503.4L291 503L292.9 502.6L294.9 502.2L296.8 501.8L298.7 501.3L300.6 500.9L302.6 500.5L304.5 500.1L306.4 499.7L308.4 499.3L310.3 498.8L312.2 498.4L314.2 498L316.1 497.6L318 497.2L319.9 496.8L321.9 496.3L323.8 495.9L325.7 495.5L327.7 495.1L329.6 494.7L331.5 494.3L333.4 493.8L335.4 493.4L337.3 493L339.2 492.6L341.2 492.2L343.1 491.8L345 491.3L347 490.9L348.9 490.5L350.8 490.1L352.7 489.7L354.7 489.3L356.6 488.8L358.5 488.4L360.5 488L362.4 487.6L364.3 487.2L366.3 486.8L368.2 486.3L370.1 485.9L372 485.5L374 485.1L375.9 484.7L377.8 484.3L379.8 483.8L381.7 483.4L383.6 483L385.5 482.6L387.5 482.2L389.4 481.8L391.3 481.3L393.3 480.9L395.2 480.5L397.1 480.1L399.1 479.7L401 479.3L402.9 478.8L404.8 478.4L406.8 478L408.7 477.6L410.6 477.2L412.6 476.8L414.5 476.3L416.4 475.9L418.4 475.5L420.3 475.1L422.2 474.7L424.1 474.3L426.1 473.8L428 473.4" stroke="#00ffff" stroke-width="1" fill="none"/>
<path d="M44 585.4L45.9 585L47.9 584.5L49.8 584.1L51.7 583.6L53.6 583.2L55.6 582.7L57.5 582.2L59.4 581.7L61.4 581.2L63.3 580.7L65.2 580.1L67.2 579.6L69.1 579.1L71 578.6L72.9 578L74.9 577.5L76.8 576.9L78.7 576.3L80.7 575.7L82.6 575.1L84.5 574.5L86.5 573.8L88.4 573L90.3 572.3L92.2 571.5L94.2 570.6L96.1 569.7L98 568.7L100 567.6L101.9 566.5L103.8 565.3L105.7 564L107.7 562.7L109.6 561.3L111.5 559.8L113.5 558.3L115.4 556.7L117.3 555.1L119.3 553.5L121.2 551.8L123.1 550.2L125 548.6L127 547.1L128.9 545.6L130.8 544.2L132.8 542.9L134.7 541.7L136.6 540.7L138.6 539.9L140.5 539.2L142.4 538.7L144.3 538.5L146.3 538.4L148.2 538.6L150.1 539.1L152.1 539.7L154 540.6L155.9 541.6L157.8 542.9L159.8 544.3L161.7 545.9L163.6 547.6L165.6 549.3L167.5 551.1L169.4 552.9L171.4 554.5L173.3 556.1L175.2 557.4L177.1 558.5L179.1 559.4L181 559.8L182.9 559.8L184.9 559.4L186.8 558.4L188.7 556.9L190.7 554.7L192.6 551.9L194.5 548.4L196.4 544.2L198.4 539.3L200.3 533.7L202.2 527.3L204.2 520.3L206.1 512.7L208 504.5L209.9 495.7L211.9 486.5L213.8 476.9L215.7 467L217.7 456.9L219.6 446.8L221.5 436.7L223.4 427M259.9 427L260.1 428.7L262.1 442.5L264 457.2L265.9 472.8L267.8 489L269.8 505.7L271.7 522.4L273.6 539.2L275.6 555.5L277.5 571.3L279.4 586.2L281.3 599.9L283.3 612.2L285.2 622.8L287.1 631.5L289.1 638L291 642.1L292.9 643.6L294.9 642.3L296.8 638.1L298.7 630.9L300.6 620.6L302.6 607.2L304.5 590.6L306.4 571.1L308.4 548.6L310.3 523.2L312.2 495.3L314.2 465L316.1 432.5L316.4 427M376.7 427L377.8 459L379.8 516.1L381.7 572.7L383.6 627.9L385.5 681.1L385.9 691M417.3 691L418.4 655L420.3 583.4L422.2 505.5L424 427" stroke="#a0522d" stroke-width="1" fill="none"/>
  </g>
  <g shape-rendering="crispEdges">
<path d="M399 437.5H419" stroke="#ff0000" stroke-width="1" fill="none"/>
<path d="M409.5 436v3" stroke="#ff0000" fill="none"/>
<path d="M399 451.5H419" stroke="#00ff00" stroke-width="1" fill="none"/>
<path d="M408.5 450v3M410.5 450v3" stroke="#00ff00" fill="none"/>
<path d="M399 465.5H419" stroke="#0000ff" stroke-width="1" fill="none"/>
<rect x="408" y="464" width="3" height="3" fill="#0000ff"/>
<path d="M399 479.5H419" stroke="#ff00ff" stroke-width="1" fill="none"/>
<rect x="408" y="478" width="3" height="3" fill="#ff00ff"/>
<path d="M399 492.5H419" stroke="#00ffff" stroke-width="1" fill="none"/>
<path d="M399 506.5H419" stroke="#a0522d" stroke-width="1" fill="none"/>
  </g>
  <g font-family="Liberation Mono" font-size="13.5" fill="#000">
<text x="394" y="441.9" text-anchor="end" textLength="35.2" lengthAdjust="spacingAndGlyphs">sin(x)</text>
<text x="394" y="455.7" text-anchor="end" textLength="35.2" lengthAdjust="spacingAndGlyphs">cos(x)</text>
<text x="394" y="469.4" text-anchor="end" textLength="41.2" lengthAdjust="spacingAndGlyphs">atan(x)</text>
<text x="394" y="483.2" text-anchor="end" textLength="41.2" lengthAdjust="spacingAndGlyphs">sqrt(x)</text>
<text x="394" y="496.9" text-anchor="end" textLength="29.2" lengthAdjust="spacingAndGlyphs">Slope</text>
<text x="394" y="510.7" text-anchor="end" textLength="47.2" lengthAdjust="spacingAndGlyphs">Equation</text>
<text x="235.5" y="409.5" text-anchor="middle" textLength="83.2" lengthAdjust="spacingAndGlyphs">Testbench plot</text>
<text x="235.5" y="729.5" text-anchor="middle" textLength="5.2" lengthAdjust="spacingAndGlyphs">x</text>
<text x="46.5" y="708.5" text-anchor="middle" textLength="5.2" lengthAdjust="spacingAndGlyphs">0</text>
<text x="107.6" y="708.5" text-anchor="middle" textLength="17.2" lengthAdjust="spacingAndGlyphs">0.5</text>
<text x="168.7" y="708.5" text-anchor="middle" textLength="5.2" lengthAdjust="spacingAndGlyphs">1</text>
<text x="229.8" y="708.5" text-anchor="middle" textLength="17.2" lengthAdjust="spacingAndGlyphs">1.5</text>
<text x="291" y="708.5" text-anchor="middle" textLength="5.2" lengthAdjust="spacingAndGlyphs">2</text>
<text x="352.1" y="708.5" text-anchor="middle" textLength="17.2" lengthAdjust="spacingAndGlyphs">2.5</text>
<text x="413.2" y="708.5" text-anchor="middle" textLength="5.2" lengthAdjust="spacingAndGlyphs">3</text>
<text x="39.5" y="668.4" text-anchor="end" textLength="11.2" lengthAdjust="spacingAndGlyphs">-4</text>
<text x="39.5" y="615.6" text-anchor="end" textLength="11.2" lengthAdjust="spacingAndGlyphs">-2</text>
<text x="39.5" y="562.8" text-anchor="end" textLength="5.2" lengthAdjust="spacingAndGlyphs">0</text>
<text x="39.5" y="510" text-anchor="end" textLength="5.2" lengthAdjust="spacingAndGlyphs">2</text>
<text x="39.5" y="457.2" text-anchor="end" textLength="5.2" lengthAdjust="spacingAndGlyphs">4</text>
<text transform="translate(22.5,560.5) rotate(-90)" text-anchor="middle" textLength="101" lengthAdjust="spacingAndGlyphs">sin,cos,atan,sqrt</text>
<text transform="translate(85.5,425) rotate(-90)" font-family="Liberation Sans" font-weight="bold" font-size="7.5" textLength="39" lengthAdjust="spacingAndGlyphs">Created using</text>
  </g>
</svg>
</div>
</body></html>
